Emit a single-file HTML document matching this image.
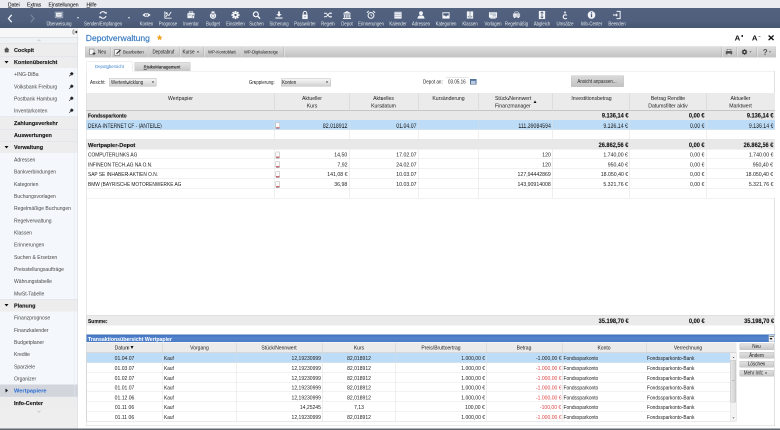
<!DOCTYPE html>
<html><head><meta charset="utf-8"><style>
html,body{margin:0;padding:0;width:780px;height:430px;overflow:hidden;background:#fff;}
#root{position:absolute;left:0;top:0;width:1560px;height:860px;transform:scale(0.5);transform-origin:0 0;will-change:transform;-webkit-font-smoothing:antialiased;font-family:"Liberation Sans",sans-serif;overflow:hidden;}
u{text-decoration:underline;text-decoration-thickness:1px;}
</style></head><body><div id="root">
<div style="position:absolute;left:0.00px;top:0.00px;width:1560.00px;height:16.40px;background:#e9ebf1;"></div>
<div style="position:absolute;left:16.00px;transform-origin:0 50%;top:-3.20px;height:24.00px;line-height:24.00px;font-size:11.36px;color:#1a1a1a;font-weight:normal;white-space:nowrap;transform:scaleX(0.88);-webkit-text-stroke:0.2px #1a1a1a;"><u>D</u>atei</div>
<div style="position:absolute;left:54.00px;transform-origin:0 50%;top:-3.20px;height:24.00px;line-height:24.00px;font-size:11.36px;color:#1a1a1a;font-weight:normal;white-space:nowrap;transform:scaleX(0.88);-webkit-text-stroke:0.2px #1a1a1a;">E<u>x</u>tras</div>
<div style="position:absolute;left:97.00px;transform-origin:0 50%;top:-3.20px;height:24.00px;line-height:24.00px;font-size:11.36px;color:#1a1a1a;font-weight:normal;white-space:nowrap;transform:scaleX(0.88);-webkit-text-stroke:0.2px #1a1a1a;">E<u>i</u>nstellungen</div>
<div style="position:absolute;left:172.60px;transform-origin:0 50%;top:-3.20px;height:24.00px;line-height:24.00px;font-size:11.36px;color:#1a1a1a;font-weight:normal;white-space:nowrap;transform:scaleX(0.88);-webkit-text-stroke:0.2px #1a1a1a;"><u>H</u>ilfe</div>
<div style="position:absolute;left:0.00px;top:16.40px;width:1560.00px;height:39.20px;background:linear-gradient(#52627f,#4f5f7d 65%,#485772);"></div>
<svg style="position:absolute;left:15.00px;top:28.00px;width:10.00px;height:18.00px" viewBox="0 0 5 9"><path d="M4.2 0.8 L1 4.5 L4.2 8.2" stroke="#f2f4f8" stroke-width="1.3" fill="none"/></svg>
<svg style="position:absolute;left:60.00px;top:28.00px;width:10.00px;height:18.00px" viewBox="0 0 5 9"><path d="M0.8 0.8 L4 4.5 L0.8 8.2" stroke="#76839b" stroke-width="1.3" fill="none"/></svg>
<div style="position:absolute;left:-82.00px;width:400.00px;text-align:center;transform-origin:50% 50%;top:35.60px;height:24.00px;line-height:24.00px;font-size:10.49px;color:#e4e8ee;font-weight:normal;white-space:nowrap;transform:scaleX(0.82);">Überweisung</div>
<svg style="position:absolute;left:109.00px;top:21.20px;width:18.00px;height:18.00px" viewBox="0 0 20 20"><rect x="1.5" y="3.5" width="17" height="12.5" fill="none" stroke="#aeb7c7" stroke-width="1.6"/><rect x="3.5" y="5" width="12.5" height="9" fill="#f2f4f8"/><rect x="6" y="8.5" width="8" height="2" fill="#a6afbf"/><rect x="5" y="16" width="10" height="1.5" fill="#aeb7c7"/></svg>
<div style="position:absolute;left:6.00px;width:400.00px;text-align:center;transform-origin:50% 50%;top:35.60px;height:24.00px;line-height:24.00px;font-size:10.49px;color:#e4e8ee;font-weight:normal;white-space:nowrap;transform:scaleX(0.82);">Senden/Empfangen</div>
<svg style="position:absolute;left:197.00px;top:21.20px;width:18.00px;height:18.00px" viewBox="0 0 20 20"><path d="M15.5 5.5 A7 7 0 0 0 3.3 7.5" stroke="#f2f4f8" stroke-width="2.4" fill="none"/><path d="M4.5 14.5 A7 7 0 0 0 16.7 12.5" stroke="#f2f4f8" stroke-width="2.4" fill="none"/><path d="M12.5 5.5 L18 2.5 L18 8 Z" fill="#f2f4f8"/><path d="M7.5 14.5 L2 17.5 L2 12 Z" fill="#f2f4f8"/></svg>
<div style="position:absolute;left:93.00px;width:400.00px;text-align:center;transform-origin:50% 50%;top:35.60px;height:24.00px;line-height:24.00px;font-size:10.49px;color:#e4e8ee;font-weight:normal;white-space:nowrap;transform:scaleX(0.82);">Konten</div>
<svg style="position:absolute;left:284.00px;top:21.20px;width:18.00px;height:18.00px" viewBox="0 0 20 20"><path d="M1 10 Q10 1 19 10 Q10 19 1 10 Z" fill="#f2f4f8"/><circle cx="10" cy="10" r="3" fill="#4b5b7b"/><circle cx="10" cy="10" r="1.5" fill="#f2f4f8"/></svg>
<div style="position:absolute;left:136.00px;width:400.00px;text-align:center;transform-origin:50% 50%;top:35.60px;height:24.00px;line-height:24.00px;font-size:10.49px;color:#e4e8ee;font-weight:normal;white-space:nowrap;transform:scaleX(0.82);">Prognose</div>
<svg style="position:absolute;left:327.00px;top:21.20px;width:18.00px;height:18.00px" viewBox="0 0 20 20"><path d="M3 2 L3 17 L18 17" stroke="#f2f4f8" stroke-width="2" fill="none"/><path d="M5 14 L9 9 L12 11 L17 3" stroke="#f2f4f8" stroke-width="2" fill="none"/><rect x="5" y="4" width="4" height="4" fill="#f2f4f8"/></svg>
<div style="position:absolute;left:182.00px;width:400.00px;text-align:center;transform-origin:50% 50%;top:35.60px;height:24.00px;line-height:24.00px;font-size:10.49px;color:#e4e8ee;font-weight:normal;white-space:nowrap;transform:scaleX(0.82);">Inventar</div>
<svg style="position:absolute;left:373.00px;top:21.20px;width:18.00px;height:18.00px" viewBox="0 0 20 20"><rect x="2" y="6" width="16" height="11" fill="#f2f4f8"/><rect x="6" y="3" width="8" height="3" fill="none" stroke="#f2f4f8" stroke-width="1.6"/><rect x="4" y="9" width="7" height="2" fill="#8e9ab0"/><path d="M12 17 L12 12 L15 9 L18 12 L18 17 Z" fill="#4b5b7b"/><path d="M13 17 L13 12.5 L15 10.5 L17 12.5 L17 17 Z" fill="#f2f4f8"/></svg>
<div style="position:absolute;left:226.00px;width:400.00px;text-align:center;transform-origin:50% 50%;top:35.60px;height:24.00px;line-height:24.00px;font-size:10.49px;color:#e4e8ee;font-weight:normal;white-space:nowrap;transform:scaleX(0.82);">Budget</div>
<svg style="position:absolute;left:417.00px;top:21.20px;width:18.00px;height:18.00px" viewBox="0 0 20 20"><circle cx="10" cy="11.5" r="7" fill="#f2f4f8"/><rect x="6.5" y="2" width="7" height="4" rx="1.5" fill="#f2f4f8"/><rect x="6" y="6" width="8" height="1.2" fill="#4b5b7b"/><circle cx="10" cy="12" r="3.2" fill="none" stroke="#8e9ab0" stroke-width="1.4"/></svg>
<div style="position:absolute;left:271.00px;width:400.00px;text-align:center;transform-origin:50% 50%;top:35.60px;height:24.00px;line-height:24.00px;font-size:10.49px;color:#e4e8ee;font-weight:normal;white-space:nowrap;transform:scaleX(0.82);">Einstellen</div>
<svg style="position:absolute;left:462.00px;top:21.20px;width:18.00px;height:18.00px" viewBox="0 0 20 20"><g fill="#f2f4f8"><circle cx="10" cy="10" r="6"/><rect x="8" y="1" width="4" height="18"/><rect x="1" y="8" width="18" height="4"/><rect x="8" y="1" width="4" height="18" transform="rotate(45 10 10)"/><rect x="8" y="1" width="4" height="18" transform="rotate(-45 10 10)"/></g><circle cx="10" cy="10" r="2.6" fill="#4b5b7b"/></svg>
<div style="position:absolute;left:313.00px;width:400.00px;text-align:center;transform-origin:50% 50%;top:35.60px;height:24.00px;line-height:24.00px;font-size:10.49px;color:#e4e8ee;font-weight:normal;white-space:nowrap;transform:scaleX(0.82);">Suchen</div>
<svg style="position:absolute;left:504.00px;top:21.20px;width:18.00px;height:18.00px" viewBox="0 0 20 20"><circle cx="8.5" cy="8.5" r="5.5" stroke="#f2f4f8" stroke-width="2.6" fill="none"/><path d="M12.5 12.5 L18 18" stroke="#f2f4f8" stroke-width="3"/></svg>
<div style="position:absolute;left:358.00px;width:400.00px;text-align:center;transform-origin:50% 50%;top:35.60px;height:24.00px;line-height:24.00px;font-size:10.49px;color:#e4e8ee;font-weight:normal;white-space:nowrap;transform:scaleX(0.82);">Sicherung</div>
<svg style="position:absolute;left:549.00px;top:21.20px;width:18.00px;height:18.00px" viewBox="0 0 20 20"><path d="M8 2 L12 2 L12 8 L16 8 L10 14 L4 8 L8 8 Z" fill="#f2f4f8"/><rect x="2" y="15.5" width="16" height="2.5" fill="#f2f4f8"/></svg>
<div style="position:absolute;left:410.00px;width:400.00px;text-align:center;transform-origin:50% 50%;top:35.60px;height:24.00px;line-height:24.00px;font-size:10.49px;color:#e4e8ee;font-weight:normal;white-space:nowrap;transform:scaleX(0.82);">Passwörter</div>
<svg style="position:absolute;left:601.00px;top:21.20px;width:18.00px;height:18.00px" viewBox="0 0 20 20"><path d="M6 9 L6 6 A4 4 0 0 1 14 6 L14 9" stroke="#f2f4f8" stroke-width="2.2" fill="none"/><rect x="4" y="9" width="12" height="10" fill="#f2f4f8"/><circle cx="10" cy="14" r="1.3" fill="#4b5b7b"/></svg>
<div style="position:absolute;left:456.00px;width:400.00px;text-align:center;transform-origin:50% 50%;top:35.60px;height:24.00px;line-height:24.00px;font-size:10.49px;color:#e4e8ee;font-weight:normal;white-space:nowrap;transform:scaleX(0.82);">Regeln</div>
<svg style="position:absolute;left:647.00px;top:21.20px;width:18.00px;height:18.00px" viewBox="0 0 20 20"><path d="M1 6 L6 6 L13 14 L17 14" stroke="#f2f4f8" stroke-width="2.2" fill="none"/><path d="M1 14 L6 14 L13 6 L17 6" stroke="#f2f4f8" stroke-width="2.2" fill="none"/><path d="M16 3 L19 6 L16 9 Z M16 11 L19 14 L16 17 Z" fill="#f2f4f8"/></svg>
<div style="position:absolute;left:494.00px;width:400.00px;text-align:center;transform-origin:50% 50%;top:35.60px;height:24.00px;line-height:24.00px;font-size:10.49px;color:#e4e8ee;font-weight:normal;white-space:nowrap;transform:scaleX(0.82);">Depot</div>
<svg style="position:absolute;left:685.00px;top:21.20px;width:18.00px;height:18.00px" viewBox="0 0 20 20"><path d="M10 1 L19 6 L1 6 Z" fill="#f2f4f8"/><rect x="2" y="7" width="16" height="2" fill="#f2f4f8"/><rect x="3" y="10" width="2.4" height="6" fill="#f2f4f8"/><rect x="7" y="10" width="2.4" height="6" fill="#f2f4f8"/><rect x="11" y="10" width="2.4" height="6" fill="#f2f4f8"/><rect x="15" y="10" width="2.4" height="6" fill="#f2f4f8"/><rect x="1" y="16.5" width="18" height="2.5" fill="#f2f4f8"/></svg>
<div style="position:absolute;left:542.00px;width:400.00px;text-align:center;transform-origin:50% 50%;top:35.60px;height:24.00px;line-height:24.00px;font-size:10.49px;color:#e4e8ee;font-weight:normal;white-space:nowrap;transform:scaleX(0.82);">Erinnerungen</div>
<svg style="position:absolute;left:733.00px;top:21.20px;width:18.00px;height:18.00px" viewBox="0 0 20 20"><circle cx="10" cy="11" r="6.5" stroke="#f2f4f8" stroke-width="2.2" fill="none"/><path d="M10 7 L10 11 L13 13" stroke="#f2f4f8" stroke-width="1.6" fill="none"/><path d="M1 5 L5 1 M19 5 L15 1" stroke="#f2f4f8" stroke-width="2.4"/></svg>
<div style="position:absolute;left:596.00px;width:400.00px;text-align:center;transform-origin:50% 50%;top:35.60px;height:24.00px;line-height:24.00px;font-size:10.49px;color:#e4e8ee;font-weight:normal;white-space:nowrap;transform:scaleX(0.82);">Kalender</div>
<svg style="position:absolute;left:787.00px;top:21.20px;width:18.00px;height:18.00px" viewBox="0 0 20 20"><rect x="2" y="3" width="16" height="15" fill="#f2f4f8"/><rect x="2" y="3" width="16" height="3" fill="#c9cfda"/><g fill="#9aa5b8"><rect x="4" y="8" width="3" height="2"/><rect x="8.5" y="8" width="3" height="2"/><rect x="13" y="8" width="3" height="2"/><rect x="4" y="12" width="3" height="2"/><rect x="8.5" y="12" width="3" height="2"/><rect x="13" y="12" width="3" height="2"/></g></svg>
<div style="position:absolute;left:642.00px;width:400.00px;text-align:center;transform-origin:50% 50%;top:35.60px;height:24.00px;line-height:24.00px;font-size:10.49px;color:#e4e8ee;font-weight:normal;white-space:nowrap;transform:scaleX(0.82);">Adressen</div>
<svg style="position:absolute;left:833.00px;top:21.20px;width:18.00px;height:18.00px" viewBox="0 0 20 20"><circle cx="10" cy="6" r="4.2" fill="#f2f4f8"/><path d="M2 18 Q3 10 10 11 Q17 10 18 18 Z" fill="#f2f4f8"/></svg>
<div style="position:absolute;left:692.00px;width:400.00px;text-align:center;transform-origin:50% 50%;top:35.60px;height:24.00px;line-height:24.00px;font-size:10.49px;color:#e4e8ee;font-weight:normal;white-space:nowrap;transform:scaleX(0.82);">Kategorien</div>
<svg style="position:absolute;left:883.00px;top:21.20px;width:18.00px;height:18.00px" viewBox="0 0 20 20"><path d="M2 4 L18 4 L18 18 L2 18 Z" fill="#f2f4f8"/><path d="M4 6 L16 6 L16 11 L12 11 L10 14 L8 11 L4 11 Z" fill="#4b5b7b"/></svg>
<div style="position:absolute;left:740.00px;width:400.00px;text-align:center;transform-origin:50% 50%;top:35.60px;height:24.00px;line-height:24.00px;font-size:10.49px;color:#e4e8ee;font-weight:normal;white-space:nowrap;transform:scaleX(0.82);">Klassen</div>
<svg style="position:absolute;left:931.00px;top:21.20px;width:18.00px;height:18.00px" viewBox="0 0 20 20"><rect x="3" y="2" width="14" height="16" fill="#f2f4f8"/><path d="M10 2 L10 18" stroke="#4b5b7b" stroke-width="1.2"/><rect x="5" y="12" width="3" height="3" fill="#8e9ab0"/><rect x="12" y="12" width="3" height="3" fill="#8e9ab0"/></svg>
<div style="position:absolute;left:786.00px;width:400.00px;text-align:center;transform-origin:50% 50%;top:35.60px;height:24.00px;line-height:24.00px;font-size:10.49px;color:#e4e8ee;font-weight:normal;white-space:nowrap;transform:scaleX(0.82);">Vorlagen</div>
<svg style="position:absolute;left:977.00px;top:21.20px;width:18.00px;height:18.00px" viewBox="0 0 20 20"><rect x="1" y="4" width="18" height="12" fill="#f2f4f8"/><rect x="3" y="7" width="14" height="1.8" fill="#8e9ab0"/><rect x="9" y="11" width="8" height="1.8" fill="#8e9ab0"/><rect x="4" y="16" width="12" height="2" fill="#f2f4f8"/></svg>
<div style="position:absolute;left:833.00px;width:400.00px;text-align:center;transform-origin:50% 50%;top:35.60px;height:24.00px;line-height:24.00px;font-size:10.49px;color:#e4e8ee;font-weight:normal;white-space:nowrap;transform:scaleX(0.82);">Regelmäßig</div>
<svg style="position:absolute;left:1024.00px;top:21.20px;width:18.00px;height:18.00px" viewBox="0 0 20 20"><rect x="2" y="6" width="16" height="9" rx="2" fill="#c9cfda"/><rect x="4" y="8" width="6" height="3" fill="#f2f4f8"/><circle cx="6" cy="15" r="2" fill="#f2f4f8"/><circle cx="14" cy="15" r="2" fill="#f2f4f8"/><path d="M5 6 L7 3 L13 3 L15 6" stroke="#c9cfda" stroke-width="1.6" fill="none"/></svg>
<div style="position:absolute;left:884.00px;width:400.00px;text-align:center;transform-origin:50% 50%;top:35.60px;height:24.00px;line-height:24.00px;font-size:10.49px;color:#e4e8ee;font-weight:normal;white-space:nowrap;transform:scaleX(0.82);">Abgleich</div>
<svg style="position:absolute;left:1075.00px;top:21.20px;width:18.00px;height:18.00px" viewBox="0 0 20 20"><rect x="3" y="1" width="14" height="18" fill="#f2f4f8"/><path d="M10 3 L10 17" stroke="#4b5b7b" stroke-width="1.8"/><path d="M7 6 L10 3 L13 6 M7 14 L10 17 L13 14" stroke="#4b5b7b" stroke-width="1.6" fill="none"/></svg>
<div style="position:absolute;left:930.00px;width:400.00px;text-align:center;transform-origin:50% 50%;top:35.60px;height:24.00px;line-height:24.00px;font-size:10.49px;color:#e4e8ee;font-weight:normal;white-space:nowrap;transform:scaleX(0.82);">Umsätze</div>
<svg style="position:absolute;left:1121.00px;top:21.20px;width:18.00px;height:18.00px" viewBox="0 0 20 20"><path d="M10 1 L13 5 L7 5 Z" fill="#f2f4f8"/><path d="M10 5 L10 8" stroke="#f2f4f8" stroke-width="1.6"/><path d="M14 11 A4.5 4.5 0 1 0 14 17" stroke="#f2f4f8" stroke-width="2.6" fill="none"/></svg>
<div style="position:absolute;left:983.00px;width:400.00px;text-align:center;transform-origin:50% 50%;top:35.60px;height:24.00px;line-height:24.00px;font-size:10.49px;color:#e4e8ee;font-weight:normal;white-space:nowrap;transform:scaleX(0.82);">Info-Center</div>
<svg style="position:absolute;left:1174.00px;top:21.20px;width:18.00px;height:18.00px" viewBox="0 0 20 20"><circle cx="10" cy="10" r="8.5" fill="#f2f4f8"/><rect x="8.6" y="8" width="2.8" height="7" fill="#4b5b7b"/><circle cx="10" cy="5.3" r="1.6" fill="#4b5b7b"/></svg>
<div style="position:absolute;left:1034.00px;width:400.00px;text-align:center;transform-origin:50% 50%;top:35.60px;height:24.00px;line-height:24.00px;font-size:10.49px;color:#e4e8ee;font-weight:normal;white-space:nowrap;transform:scaleX(0.82);">Beenden</div>
<svg style="position:absolute;left:1225.00px;top:21.20px;width:18.00px;height:18.00px" viewBox="0 0 20 20"><path d="M9 2 L17 2 L17 18 L9 18" stroke="#f2f4f8" stroke-width="2.2" fill="none"/><path d="M1 10 L11 10" stroke="#f2f4f8" stroke-width="2.4"/><path d="M8 6 L12 10 L8 14 Z" fill="#f2f4f8"/></svg>
<div style="position:absolute;left:153.60px;top:34.00px;width:0;height:0;border-left:2.40px solid transparent;border-right:2.40px solid transparent;border-top:4.00px solid #dfe4ec"></div>
<div style="position:absolute;left:255.60px;top:34.00px;width:0;height:0;border-left:2.40px solid transparent;border-right:2.40px solid transparent;border-top:4.00px solid #dfe4ec"></div>
<div style="position:absolute;left:0.00px;top:55.60px;width:156.00px;height:804.40px;background:#eeeeee;"></div>
<div style="position:absolute;left:0.00px;top:55.60px;width:156.00px;height:18.40px;background:#f7f7f7;"></div>
<div style="position:absolute;left:0.00px;top:73.80px;width:157.00px;height:1.20px;background:#cdd5e0;"></div>
<div style="position:absolute;left:0.00px;top:75.00px;width:157.00px;height:12.20px;background:#f0f1f3;"></div>
<div style="position:absolute;left:155.20px;top:55.60px;width:1.00px;height:801.40px;background:#d6dae0;"></div>
<svg style="position:absolute;left:145.00px;top:59.00px;width:10.00px;height:10.00px" viewBox="0 0 10 10"><path d="M1 1 L1 9 M1 1 L4 1 M1 9 L4 9" stroke="#555" stroke-width="1.2" fill="none"/><path d="M4 5 L9 5 M6.5 2.5 L9 5 L6.5 7.5" stroke="#222" stroke-width="1.6" fill="none"/></svg>
<div style="position:absolute;left:0.00px;top:87.20px;width:155.20px;height:24.34px;background:#ededed;border-top:1px solid #d9dfe7;box-sizing:border-box;"></div>
<div style="position:absolute;left:28.00px;transform-origin:0 50%;top:87.77px;height:24.00px;line-height:24.00px;font-size:10.90px;color:#1a1a1a;font-weight:bold;white-space:nowrap;transform:scaleX(1.0);-webkit-text-stroke:0.25px #1a1a1a;">Cockpit</div>
<svg style="position:absolute;left:8.00px;top:94.17px;width:10.80px;height:10.80px" viewBox="0 0 10 10"><path d="M5 0.5 L10 5.2 L8.6 5.2 L8.6 10 L1.4 10 L1.4 5.2 L0 5.2 Z" fill="#555"/></svg>
<div style="position:absolute;left:0.00px;top:111.54px;width:155.20px;height:24.34px;background:#ededed;border-top:1px solid #d9dfe7;box-sizing:border-box;"></div>
<div style="position:absolute;left:28.00px;transform-origin:0 50%;top:112.11px;height:24.00px;line-height:24.00px;font-size:10.90px;color:#1a1a1a;font-weight:bold;white-space:nowrap;transform:scaleX(1.0);-webkit-text-stroke:0.25px #1a1a1a;">Kontenübersicht</div>
<div style="position:absolute;left:8.80px;top:121.61px;width:0;height:0;border-left:4.40px solid transparent;border-right:4.40px solid transparent;border-top:5.00px solid #111"></div>
<div style="position:absolute;left:0.00px;top:135.88px;width:155.20px;height:24.34px;background:#f4f8fc;"></div>
<div style="position:absolute;left:28.00px;transform-origin:0 50%;top:136.45px;height:24.00px;line-height:24.00px;font-size:11.48px;color:#474747;font-weight:normal;white-space:nowrap;transform:scaleX(0.88);">+ING-DiBa</div>
<svg style="position:absolute;left:137.60px;top:143.25px;width:10.00px;height:10.00px" viewBox="0 0 10 10"><path d="M5.5 0.5 L9.5 4.5 L8 5.5 L6 8.5 L1.5 4 L4.5 2 Z" fill="#222"/><path d="M3.5 6.5 L0.5 9.5" stroke="#222" stroke-width="1.5"/></svg>
<div style="position:absolute;left:0.00px;top:160.22px;width:155.20px;height:24.34px;background:#f4f8fc;"></div>
<div style="position:absolute;left:28.00px;transform-origin:0 50%;top:160.79px;height:24.00px;line-height:24.00px;font-size:11.48px;color:#474747;font-weight:normal;white-space:nowrap;transform:scaleX(0.88);">Volksbank Freiburg</div>
<svg style="position:absolute;left:137.60px;top:167.59px;width:10.00px;height:10.00px" viewBox="0 0 10 10"><path d="M5.5 0.5 L9.5 4.5 L8 5.5 L6 8.5 L1.5 4 L4.5 2 Z" fill="#222"/><path d="M3.5 6.5 L0.5 9.5" stroke="#222" stroke-width="1.5"/></svg>
<div style="position:absolute;left:0.00px;top:184.56px;width:155.20px;height:24.34px;background:#f4f8fc;"></div>
<div style="position:absolute;left:28.00px;transform-origin:0 50%;top:185.13px;height:24.00px;line-height:24.00px;font-size:11.48px;color:#474747;font-weight:normal;white-space:nowrap;transform:scaleX(0.88);">Postbank Hamburg</div>
<svg style="position:absolute;left:137.60px;top:191.93px;width:10.00px;height:10.00px" viewBox="0 0 10 10"><path d="M5.5 0.5 L9.5 4.5 L8 5.5 L6 8.5 L1.5 4 L4.5 2 Z" fill="#222"/><path d="M3.5 6.5 L0.5 9.5" stroke="#222" stroke-width="1.5"/></svg>
<div style="position:absolute;left:0.00px;top:208.90px;width:155.20px;height:24.34px;background:#f4f8fc;"></div>
<div style="position:absolute;left:28.00px;transform-origin:0 50%;top:209.47px;height:24.00px;line-height:24.00px;font-size:11.48px;color:#474747;font-weight:normal;white-space:nowrap;transform:scaleX(0.88);">Inventarkonten</div>
<svg style="position:absolute;left:137.60px;top:216.27px;width:10.00px;height:10.00px" viewBox="0 0 10 10"><path d="M5.5 0.5 L9.5 4.5 L8 5.5 L6 8.5 L1.5 4 L4.5 2 Z" fill="#222"/><path d="M3.5 6.5 L0.5 9.5" stroke="#222" stroke-width="1.5"/></svg>
<div style="position:absolute;left:0.00px;top:233.24px;width:155.20px;height:24.34px;background:#ededed;border-top:1px solid #d9dfe7;box-sizing:border-box;"></div>
<div style="position:absolute;left:28.00px;transform-origin:0 50%;top:233.81px;height:24.00px;line-height:24.00px;font-size:10.90px;color:#1a1a1a;font-weight:bold;white-space:nowrap;transform:scaleX(1.0);-webkit-text-stroke:0.25px #1a1a1a;">Zahlungsverkehr</div>
<div style="position:absolute;left:0.00px;top:257.58px;width:155.20px;height:24.34px;background:#ededed;border-top:1px solid #d9dfe7;box-sizing:border-box;"></div>
<div style="position:absolute;left:28.00px;transform-origin:0 50%;top:258.15px;height:24.00px;line-height:24.00px;font-size:10.90px;color:#1a1a1a;font-weight:bold;white-space:nowrap;transform:scaleX(1.0);-webkit-text-stroke:0.25px #1a1a1a;">Auswertungen</div>
<div style="position:absolute;left:0.00px;top:281.92px;width:155.20px;height:24.34px;background:#ededed;border-top:1px solid #d9dfe7;box-sizing:border-box;"></div>
<div style="position:absolute;left:28.00px;transform-origin:0 50%;top:282.49px;height:24.00px;line-height:24.00px;font-size:10.90px;color:#1a1a1a;font-weight:bold;white-space:nowrap;transform:scaleX(1.0);-webkit-text-stroke:0.25px #1a1a1a;">Verwaltung</div>
<div style="position:absolute;left:8.80px;top:291.99px;width:0;height:0;border-left:4.40px solid transparent;border-right:4.40px solid transparent;border-top:5.00px solid #111"></div>
<div style="position:absolute;left:0.00px;top:306.26px;width:155.20px;height:24.34px;background:#f4f8fc;"></div>
<div style="position:absolute;left:28.00px;transform-origin:0 50%;top:306.83px;height:24.00px;line-height:24.00px;font-size:11.48px;color:#474747;font-weight:normal;white-space:nowrap;transform:scaleX(0.88);">Adressen</div>
<div style="position:absolute;left:0.00px;top:330.60px;width:155.20px;height:24.34px;background:#f4f8fc;"></div>
<div style="position:absolute;left:28.00px;transform-origin:0 50%;top:331.17px;height:24.00px;line-height:24.00px;font-size:11.48px;color:#474747;font-weight:normal;white-space:nowrap;transform:scaleX(0.88);">Bankverbindungen</div>
<div style="position:absolute;left:0.00px;top:354.94px;width:155.20px;height:24.34px;background:#f4f8fc;"></div>
<div style="position:absolute;left:28.00px;transform-origin:0 50%;top:355.51px;height:24.00px;line-height:24.00px;font-size:11.48px;color:#474747;font-weight:normal;white-space:nowrap;transform:scaleX(0.88);">Kategorien</div>
<div style="position:absolute;left:0.00px;top:379.28px;width:155.20px;height:24.34px;background:#f4f8fc;"></div>
<div style="position:absolute;left:28.00px;transform-origin:0 50%;top:379.85px;height:24.00px;line-height:24.00px;font-size:11.48px;color:#474747;font-weight:normal;white-space:nowrap;transform:scaleX(0.88);">Buchungsvorlagen</div>
<div style="position:absolute;left:0.00px;top:403.62px;width:155.20px;height:24.34px;background:#f4f8fc;"></div>
<div style="position:absolute;left:28.00px;transform-origin:0 50%;top:404.19px;height:24.00px;line-height:24.00px;font-size:11.48px;color:#474747;font-weight:normal;white-space:nowrap;transform:scaleX(0.88);">Regelmäßige Buchungen</div>
<div style="position:absolute;left:0.00px;top:427.96px;width:155.20px;height:24.34px;background:#f4f8fc;"></div>
<div style="position:absolute;left:28.00px;transform-origin:0 50%;top:428.53px;height:24.00px;line-height:24.00px;font-size:11.48px;color:#474747;font-weight:normal;white-space:nowrap;transform:scaleX(0.88);">Regelverwaltung</div>
<div style="position:absolute;left:0.00px;top:452.30px;width:155.20px;height:24.34px;background:#f4f8fc;"></div>
<div style="position:absolute;left:28.00px;transform-origin:0 50%;top:452.87px;height:24.00px;line-height:24.00px;font-size:11.48px;color:#474747;font-weight:normal;white-space:nowrap;transform:scaleX(0.88);">Klassen</div>
<div style="position:absolute;left:0.00px;top:476.64px;width:155.20px;height:24.34px;background:#f4f8fc;"></div>
<div style="position:absolute;left:28.00px;transform-origin:0 50%;top:477.21px;height:24.00px;line-height:24.00px;font-size:11.48px;color:#474747;font-weight:normal;white-space:nowrap;transform:scaleX(0.88);">Erinnerungen</div>
<div style="position:absolute;left:0.00px;top:500.98px;width:155.20px;height:24.34px;background:#f4f8fc;"></div>
<div style="position:absolute;left:28.00px;transform-origin:0 50%;top:501.55px;height:24.00px;line-height:24.00px;font-size:11.48px;color:#474747;font-weight:normal;white-space:nowrap;transform:scaleX(0.88);">Suchen &amp; Ersetzen</div>
<div style="position:absolute;left:0.00px;top:525.32px;width:155.20px;height:24.34px;background:#f4f8fc;"></div>
<div style="position:absolute;left:28.00px;transform-origin:0 50%;top:525.89px;height:24.00px;line-height:24.00px;font-size:11.48px;color:#474747;font-weight:normal;white-space:nowrap;transform:scaleX(0.88);">Preisstellungsaufträge</div>
<div style="position:absolute;left:0.00px;top:549.66px;width:155.20px;height:24.34px;background:#f4f8fc;"></div>
<div style="position:absolute;left:28.00px;transform-origin:0 50%;top:550.23px;height:24.00px;line-height:24.00px;font-size:11.48px;color:#474747;font-weight:normal;white-space:nowrap;transform:scaleX(0.88);">Währungstabelle</div>
<div style="position:absolute;left:0.00px;top:574.00px;width:155.20px;height:24.34px;background:#f4f8fc;"></div>
<div style="position:absolute;left:28.00px;transform-origin:0 50%;top:574.57px;height:24.00px;line-height:24.00px;font-size:11.48px;color:#474747;font-weight:normal;white-space:nowrap;transform:scaleX(0.88);">MwSt-Tabelle</div>
<div style="position:absolute;left:0.00px;top:598.34px;width:155.20px;height:24.34px;background:#ededed;border-top:1px solid #d9dfe7;box-sizing:border-box;"></div>
<div style="position:absolute;left:28.00px;transform-origin:0 50%;top:598.91px;height:24.00px;line-height:24.00px;font-size:10.90px;color:#1a1a1a;font-weight:bold;white-space:nowrap;transform:scaleX(1.0);-webkit-text-stroke:0.25px #1a1a1a;">Planung</div>
<div style="position:absolute;left:8.80px;top:608.41px;width:0;height:0;border-left:4.40px solid transparent;border-right:4.40px solid transparent;border-top:5.00px solid #111"></div>
<div style="position:absolute;left:0.00px;top:622.68px;width:155.20px;height:24.34px;background:#f4f8fc;"></div>
<div style="position:absolute;left:28.00px;transform-origin:0 50%;top:623.25px;height:24.00px;line-height:24.00px;font-size:11.48px;color:#474747;font-weight:normal;white-space:nowrap;transform:scaleX(0.88);">Finanzprognose</div>
<div style="position:absolute;left:0.00px;top:647.02px;width:155.20px;height:24.34px;background:#f4f8fc;"></div>
<div style="position:absolute;left:28.00px;transform-origin:0 50%;top:647.59px;height:24.00px;line-height:24.00px;font-size:11.48px;color:#474747;font-weight:normal;white-space:nowrap;transform:scaleX(0.88);">Finanzkalender</div>
<div style="position:absolute;left:0.00px;top:671.36px;width:155.20px;height:24.34px;background:#f4f8fc;"></div>
<div style="position:absolute;left:28.00px;transform-origin:0 50%;top:671.93px;height:24.00px;line-height:24.00px;font-size:11.48px;color:#474747;font-weight:normal;white-space:nowrap;transform:scaleX(0.88);">Budgetplaner</div>
<div style="position:absolute;left:0.00px;top:695.70px;width:155.20px;height:24.34px;background:#f4f8fc;"></div>
<div style="position:absolute;left:28.00px;transform-origin:0 50%;top:696.27px;height:24.00px;line-height:24.00px;font-size:11.48px;color:#474747;font-weight:normal;white-space:nowrap;transform:scaleX(0.88);">Kredite</div>
<div style="position:absolute;left:0.00px;top:720.04px;width:155.20px;height:24.34px;background:#f4f8fc;"></div>
<div style="position:absolute;left:28.00px;transform-origin:0 50%;top:720.61px;height:24.00px;line-height:24.00px;font-size:11.48px;color:#474747;font-weight:normal;white-space:nowrap;transform:scaleX(0.88);">Sparziele</div>
<div style="position:absolute;left:0.00px;top:744.38px;width:155.20px;height:24.34px;background:#f4f8fc;"></div>
<div style="position:absolute;left:28.00px;transform-origin:0 50%;top:744.95px;height:24.00px;line-height:24.00px;font-size:11.48px;color:#474747;font-weight:normal;white-space:nowrap;transform:scaleX(0.88);">Organizer</div>
<div style="position:absolute;left:0.00px;top:768.72px;width:155.20px;height:24.34px;background:#d2d6dc;"></div>
<div style="position:absolute;left:28.00px;transform-origin:0 50%;top:769.29px;height:24.00px;line-height:24.00px;font-size:11.30px;color:#2c6dd2;font-weight:bold;white-space:nowrap;transform:scaleX(1.0);">Wertpapiere</div>
<div style="position:absolute;left:11.00px;top:776.89px;width:0;height:0;border-top:4.40px solid transparent;border-bottom:4.40px solid transparent;border-left:5.20px solid #111"></div>
<div style="position:absolute;left:0.00px;top:793.06px;width:155.20px;height:24.34px;background:#ededed;border-top:1px solid #d9dfe7;box-sizing:border-box;"></div>
<div style="position:absolute;left:28.00px;transform-origin:0 50%;top:793.63px;height:24.00px;line-height:24.00px;font-size:10.90px;color:#1a1a1a;font-weight:bold;white-space:nowrap;transform:scaleX(1.0);-webkit-text-stroke:0.25px #1a1a1a;">Info-Center</div>
<div style="position:absolute;left:148.80px;top:87.20px;width:0.80px;height:730.00px;background:#e6eaef;"></div>
<svg style="position:absolute;left:74.00px;top:78.40px;width:8.00px;height:6.00px" viewBox="0 0 8 5"><path d="M1 4 L4 1 L7 4" stroke="#c4c4c4" stroke-width="1.2" fill="none"/></svg>
<svg style="position:absolute;left:74.00px;top:820.00px;width:8.00px;height:6.00px" viewBox="0 0 8 5"><path d="M1 1 L4 4 L7 1" stroke="#b8b8b8" stroke-width="1.2" fill="none"/></svg>
<div style="position:absolute;left:157.40px;top:55.60px;width:1402.60px;height:801.40px;background:#ffffff;"></div>
<div style="position:absolute;left:171.60px;transform-origin:0 50%;top:64.80px;height:24.00px;line-height:24.00px;font-size:17.10px;color:#3b7cc2;font-weight:normal;white-space:nowrap;transform:scaleX(1.0);-webkit-text-stroke:0.35px #3b7cc2;">Depotverwaltung</div>
<svg style="position:absolute;left:313.00px;top:69.20px;width:12.40px;height:12.40px" viewBox="0 0 20 20"><path d="M10 0.5 L12.9 6.8 L19.6 7.3 L14.5 11.8 L16.1 18.6 L10 15 L3.9 18.6 L5.5 11.8 L0.4 7.3 L7.1 6.8 Z" fill="#f2a31d"/></svg>
<div style="position:absolute;left:1469.20px;transform-origin:0 50%;top:63.60px;height:24.00px;line-height:24.00px;font-size:15.50px;color:#111;font-weight:bold;white-space:nowrap;transform:scaleX(1.0);">A</div>
<div style="position:absolute;left:1483.20px;top:70.40px;width:3.20px;height:3.20px;background:#222;"></div>
<div style="position:absolute;left:1503.80px;transform-origin:0 50%;top:63.60px;height:24.00px;line-height:24.00px;font-size:15.50px;color:#111;font-weight:bold;white-space:nowrap;transform:scaleX(1.0);">A</div>
<div style="position:absolute;left:1517.20px;top:71.60px;width:3.60px;height:1.60px;background:#222;"></div>
<svg style="position:absolute;left:1536.00px;top:70.00px;width:12.40px;height:11.20px" viewBox="0 0 10 9"><path d="M1 0.8 L9 8.2 M9 0.8 L1 8.2" stroke="#111" stroke-width="2.2"/></svg>
<div style="position:absolute;left:170.00px;top:92.60px;width:1381.60px;height:22.80px;background:linear-gradient(#dedede,#c3c3c3);border:1px solid #c9c9c9;box-sizing:border-box;"></div>
<div style="position:absolute;left:220.80px;top:94.00px;width:1.00px;height:20.00px;background:#b3b3b3;"></div>
<div style="position:absolute;left:221.80px;top:94.00px;width:1.00px;height:20.00px;background:#efefef;"></div>
<div style="position:absolute;left:296.20px;top:94.00px;width:1.00px;height:20.00px;background:#b3b3b3;"></div>
<div style="position:absolute;left:297.20px;top:94.00px;width:1.00px;height:20.00px;background:#efefef;"></div>
<div style="position:absolute;left:359.00px;top:94.00px;width:1.00px;height:20.00px;background:#b3b3b3;"></div>
<div style="position:absolute;left:360.00px;top:94.00px;width:1.00px;height:20.00px;background:#efefef;"></div>
<div style="position:absolute;left:407.00px;top:94.00px;width:1.00px;height:20.00px;background:#b3b3b3;"></div>
<div style="position:absolute;left:408.00px;top:94.00px;width:1.00px;height:20.00px;background:#efefef;"></div>
<div style="position:absolute;left:481.60px;top:94.00px;width:1.00px;height:20.00px;background:#b3b3b3;"></div>
<div style="position:absolute;left:482.60px;top:94.00px;width:1.00px;height:20.00px;background:#efefef;"></div>
<div style="position:absolute;left:567.00px;top:94.00px;width:1.00px;height:20.00px;background:#b3b3b3;"></div>
<div style="position:absolute;left:568.00px;top:94.00px;width:1.00px;height:20.00px;background:#efefef;"></div>
<div style="position:absolute;left:1442.60px;top:94.00px;width:1.00px;height:20.00px;background:#b3b3b3;"></div>
<div style="position:absolute;left:1443.60px;top:94.00px;width:1.00px;height:20.00px;background:#efefef;"></div>
<div style="position:absolute;left:1472.80px;top:94.00px;width:1.00px;height:20.00px;background:#b3b3b3;"></div>
<div style="position:absolute;left:1473.80px;top:94.00px;width:1.00px;height:20.00px;background:#efefef;"></div>
<div style="position:absolute;left:1513.40px;top:94.00px;width:1.00px;height:20.00px;background:#b3b3b3;"></div>
<div style="position:absolute;left:1514.40px;top:94.00px;width:1.00px;height:20.00px;background:#efefef;"></div>
<svg style="position:absolute;left:177.60px;top:96.60px;width:14.00px;height:14.40px" viewBox="0 0 14 14"><rect x="1" y="1" width="9" height="11" fill="#fafafa" stroke="#777" stroke-width="1.2"/><path d="M10 7 L10 13 M7 10 L13 10" stroke="#333" stroke-width="1.8"/></svg>
<div style="position:absolute;left:196.20px;transform-origin:0 50%;top:92.40px;height:24.00px;line-height:24.00px;font-size:10.00px;color:#1c1c1c;font-weight:normal;white-space:nowrap;transform:scaleX(0.88);">Neu</div>
<svg style="position:absolute;left:227.60px;top:96.60px;width:14.80px;height:14.40px" viewBox="0 0 14 14"><rect x="1" y="2" width="10" height="11" fill="#fafafa" stroke="#777" stroke-width="1.2"/><path d="M5 10 L12.5 2.5" stroke="#333" stroke-width="2.4"/><path d="M4 11 L5.2 8.3 L6.5 9.6 Z" fill="#222"/></svg>
<div style="position:absolute;left:246.20px;transform-origin:0 50%;top:92.40px;height:24.00px;line-height:24.00px;font-size:9.77px;color:#1c1c1c;font-weight:normal;white-space:nowrap;transform:scaleX(0.88);">Bearbeiten</div>
<div style="position:absolute;left:305.20px;transform-origin:0 50%;top:92.40px;height:24.00px;line-height:24.00px;font-size:10.00px;color:#1c1c1c;font-weight:normal;white-space:nowrap;transform:scaleX(0.88);">Depotabruf</div>
<div style="position:absolute;left:365.40px;transform-origin:0 50%;top:92.40px;height:24.00px;line-height:24.00px;font-size:10.45px;color:#1c1c1c;font-weight:normal;white-space:nowrap;transform:scaleX(0.88);">Kurse</div>
<div style="position:absolute;left:393.80px;top:102.80px;width:0;height:0;border-left:2.60px solid transparent;border-right:2.60px solid transparent;border-top:3.20px solid #222"></div>
<div style="position:absolute;left:416.00px;transform-origin:0 50%;top:92.40px;height:24.00px;line-height:24.00px;font-size:9.77px;color:#1c1c1c;font-weight:normal;white-space:nowrap;transform:scaleX(0.88);">WP-Kontoblatt</div>
<div style="position:absolute;left:488.40px;transform-origin:0 50%;top:92.40px;height:24.00px;line-height:24.00px;font-size:9.43px;color:#1c1c1c;font-weight:normal;white-space:nowrap;transform:scaleX(0.88);">WP-Digitalanzeige</div>
<svg style="position:absolute;left:1451.00px;top:97.60px;width:14.00px;height:12.80px" viewBox="0 0 14 13"><rect x="3" y="0.5" width="8" height="4" fill="#eee" stroke="#555" stroke-width="1"/><rect x="0.5" y="4.5" width="13" height="6" fill="#555"/><rect x="3" y="9" width="8" height="3.5" fill="#eee" stroke="#555" stroke-width="1"/></svg>
<svg style="position:absolute;left:1483.20px;top:98.00px;width:12.00px;height:12.00px" viewBox="0 0 20 20"><g fill="#333"><circle cx="10" cy="10" r="6.5"/><rect x="8" y="1" width="4" height="18"/><rect x="1" y="8" width="18" height="4"/><rect x="8" y="1" width="4" height="18" transform="rotate(45 10 10)"/><rect x="8" y="1" width="4" height="18" transform="rotate(-45 10 10)"/></g><circle cx="10" cy="10" r="3.2" fill="#ddd"/></svg>
<div style="position:absolute;left:1499.40px;top:103.10px;width:0;height:0;border-left:2.20px solid transparent;border-right:2.20px solid transparent;border-top:2.60px solid #333"></div>
<div style="position:absolute;left:1330.40px;width:400.00px;text-align:center;transform-origin:50% 50%;top:92.80px;height:24.00px;line-height:24.00px;font-size:16.00px;color:#555;font-weight:bold;white-space:nowrap;transform:scaleX(1.0);">?</div>
<div style="position:absolute;left:1538.40px;top:103.10px;width:0;height:0;border-left:2.20px solid transparent;border-right:2.20px solid transparent;border-top:2.60px solid #333"></div>
<div style="position:absolute;left:173.20px;top:123.20px;width:92.00px;height:19.20px;background:#fff;border:1px solid #e0e0e0;border-bottom:none;box-sizing:border-box;border-radius:2px 2px 0 0;"></div>
<div style="position:absolute;left:19.20px;width:400.00px;text-align:center;transform-origin:50% 50%;top:121.20px;height:24.00px;line-height:24.00px;font-size:9.77px;color:#3b83d0;font-weight:normal;white-space:nowrap;transform:scaleX(0.88);">Depot<u>ü</u>bersicht</div>
<div style="position:absolute;left:269.40px;top:124.20px;width:111.60px;height:17.80px;background:linear-gradient(#e4e4e4,#c9c9c9);border:1px solid #c9c9c9;box-sizing:border-box;border-radius:2px 2px 0 0;"></div>
<div style="position:absolute;left:124.00px;width:400.00px;text-align:center;transform-origin:50% 50%;top:121.80px;height:24.00px;line-height:24.00px;font-size:9.77px;color:#111;font-weight:normal;white-space:nowrap;transform:scaleX(0.88);-webkit-text-stroke:0.2px #111;"><u>R</u>isikoManagement</div>
<div style="position:absolute;left:265.20px;top:141.60px;width:1285.20px;height:1.00px;background:#e6e6e6;"></div>
<div style="position:absolute;left:171.60px;top:141.60px;width:1378.80px;height:710.00px;border:1px solid #d6d6d6;border-right-color:#c4c4c4;border-top:none;box-sizing:border-box;"></div>
<div style="position:absolute;left:180.00px;transform-origin:0 50%;top:153.00px;height:24.00px;line-height:24.00px;font-size:10.00px;color:#1c1c1c;font-weight:normal;white-space:nowrap;transform:scaleX(0.88);">Ansicht:</div>
<div style="position:absolute;left:217.60px;top:156.00px;width:95.60px;height:17.00px;background:linear-gradient(#f6f6f6,#d2d2d2);border:1px solid #bdbdbd;box-sizing:border-box;border-radius:1px;"></div>
<div style="position:absolute;left:222.00px;transform-origin:0 50%;top:153.20px;height:24.00px;line-height:24.00px;font-size:10.00px;color:#222;font-weight:normal;white-space:nowrap;transform:scaleX(0.88);">Wertentwicklung</div>
<div style="position:absolute;left:303.60px;top:162.60px;width:0;height:0;border-left:2.60px solid transparent;border-right:2.60px solid transparent;border-top:3.60px solid #111"></div>
<div style="position:absolute;left:498.40px;transform-origin:0 50%;top:153.20px;height:24.00px;line-height:24.00px;font-size:10.00px;color:#1c1c1c;font-weight:normal;white-space:nowrap;transform:scaleX(0.88);">Gruppierung:</div>
<div style="position:absolute;left:561.60px;top:156.60px;width:100.00px;height:16.60px;background:linear-gradient(#f6f6f6,#d2d2d2);border:1px solid #bdbdbd;box-sizing:border-box;border-radius:1px;"></div>
<div style="position:absolute;left:564.00px;transform-origin:0 50%;top:153.40px;height:24.00px;line-height:24.00px;font-size:10.23px;color:#222;font-weight:normal;white-space:nowrap;transform:scaleX(0.88);">Konten</div>
<div style="position:absolute;left:651.60px;top:163.00px;width:0;height:0;border-left:2.60px solid transparent;border-right:2.60px solid transparent;border-top:3.60px solid #111"></div>
<div style="position:absolute;left:845.60px;transform-origin:0 50%;top:152.20px;height:24.00px;line-height:24.00px;font-size:10.34px;color:#1c1c1c;font-weight:normal;white-space:nowrap;transform:scaleX(0.88);">Depot an:</div>
<div style="position:absolute;left:892.40px;top:155.20px;width:44.60px;height:15.20px;border-top:1px solid #cfcfcf;box-sizing:border-box;"></div>
<div style="position:absolute;left:896.00px;transform-origin:0 50%;top:152.00px;height:24.00px;line-height:24.00px;font-size:10.34px;color:#1c1c1c;font-weight:normal;white-space:nowrap;transform:scaleX(0.88);">03.05.16</div>
<div style="position:absolute;left:940.00px;top:158.00px;width:13.20px;height:11.20px;background:#5f80aa;border:1px solid #486890;box-sizing:border-box;"></div>
<div style="position:absolute;left:942.40px;top:162.00px;width:8.40px;height:5.60px;background:#b9c8dc;"></div>
<div style="position:absolute;left:1141.60px;top:151.40px;width:106.60px;height:22.60px;background:linear-gradient(#dadada,#c3c3c3);border:1px solid #c6c6c6;box-sizing:border-box;border-radius:1px;"></div>
<div style="position:absolute;left:993.60px;width:400.00px;text-align:center;transform-origin:50% 50%;top:150.80px;height:24.00px;line-height:24.00px;font-size:10.23px;color:#2a2a2a;font-weight:normal;white-space:nowrap;transform:scaleX(0.88);">Ansicht anpassen...</div>
<div style="position:absolute;left:172.80px;top:185.60px;width:1376.80px;height:35.00px;background:#ebebeb;border-bottom:1px solid #a4a4a4;box-sizing:border-box;"></div>
<div style="position:absolute;left:548.80px;top:185.60px;width:1.00px;height:35.00px;background:#d0d0d0;"></div>
<div style="position:absolute;left:698.00px;top:185.60px;width:1.00px;height:35.00px;background:#d0d0d0;"></div>
<div style="position:absolute;left:836.60px;top:185.60px;width:1.00px;height:35.00px;background:#d0d0d0;"></div>
<div style="position:absolute;left:956.60px;top:185.60px;width:1.00px;height:35.00px;background:#d0d0d0;"></div>
<div style="position:absolute;left:1104.80px;top:185.60px;width:1.00px;height:35.00px;background:#d0d0d0;"></div>
<div style="position:absolute;left:1259.40px;top:185.60px;width:1.00px;height:35.00px;background:#d0d0d0;"></div>
<div style="position:absolute;left:1411.60px;top:185.60px;width:1.00px;height:35.00px;background:#d0d0d0;"></div>
<div style="position:absolute;left:161.00px;width:400.00px;text-align:center;transform-origin:50% 50%;top:184.20px;height:24.00px;line-height:24.00px;font-size:11.70px;color:#1c1c1c;font-weight:normal;white-space:nowrap;transform:scaleX(0.88);">Wertpapier</div>
<div style="position:absolute;left:423.60px;width:400.00px;text-align:center;transform-origin:50% 50%;top:184.20px;height:24.00px;line-height:24.00px;font-size:11.70px;color:#1c1c1c;font-weight:normal;white-space:nowrap;transform:scaleX(0.88);">Aktueller</div>
<div style="position:absolute;left:423.60px;width:400.00px;text-align:center;transform-origin:50% 50%;top:198.80px;height:24.00px;line-height:24.00px;font-size:11.70px;color:#1c1c1c;font-weight:normal;white-space:nowrap;transform:scaleX(0.88);">Kurs</div>
<div style="position:absolute;left:567.00px;width:400.00px;text-align:center;transform-origin:50% 50%;top:184.20px;height:24.00px;line-height:24.00px;font-size:11.70px;color:#1c1c1c;font-weight:normal;white-space:nowrap;transform:scaleX(0.88);">Aktuelles</div>
<div style="position:absolute;left:567.00px;width:400.00px;text-align:center;transform-origin:50% 50%;top:198.80px;height:24.00px;line-height:24.00px;font-size:11.70px;color:#1c1c1c;font-weight:normal;white-space:nowrap;transform:scaleX(0.88);">Kursdatum</div>
<div style="position:absolute;left:696.60px;width:400.00px;text-align:center;transform-origin:50% 50%;top:184.20px;height:24.00px;line-height:24.00px;font-size:11.70px;color:#1c1c1c;font-weight:normal;white-space:nowrap;transform:scaleX(0.88);">Kursänderung</div>
<div style="position:absolute;left:990.00px;transform-origin:0 50%;top:184.20px;height:24.00px;line-height:24.00px;font-size:11.70px;color:#1c1c1c;font-weight:normal;white-space:nowrap;transform:scaleX(0.88);">Stück/Nennwert</div>
<div style="position:absolute;left:990.00px;transform-origin:0 50%;top:198.80px;height:24.00px;line-height:24.00px;font-size:11.70px;color:#1c1c1c;font-weight:normal;white-space:nowrap;transform:scaleX(0.88);">Finanzmanager</div>
<div style="position:absolute;left:1066.80px;top:200.60px;width:0;height:0;border-left:3.20px solid transparent;border-right:3.20px solid transparent;border-bottom:5.20px solid #111"></div>
<div style="position:absolute;left:983.00px;width:400.00px;text-align:center;transform-origin:50% 50%;top:184.20px;height:24.00px;line-height:24.00px;font-size:11.70px;color:#1c1c1c;font-weight:normal;white-space:nowrap;transform:scaleX(0.88);">Investitionsbetrag</div>
<div style="position:absolute;left:1135.60px;width:400.00px;text-align:center;transform-origin:50% 50%;top:184.20px;height:24.00px;line-height:24.00px;font-size:11.70px;color:#1c1c1c;font-weight:normal;white-space:nowrap;transform:scaleX(0.88);">Betrag Rendite</div>
<div style="position:absolute;left:1135.60px;width:400.00px;text-align:center;transform-origin:50% 50%;top:198.80px;height:24.00px;line-height:24.00px;font-size:11.70px;color:#1c1c1c;font-weight:normal;white-space:nowrap;transform:scaleX(0.88);">Datumsfilter aktiv</div>
<div style="position:absolute;left:1280.60px;width:400.00px;text-align:center;transform-origin:50% 50%;top:184.20px;height:24.00px;line-height:24.00px;font-size:11.70px;color:#1c1c1c;font-weight:normal;white-space:nowrap;transform:scaleX(0.88);">Aktueller</div>
<div style="position:absolute;left:1280.60px;width:400.00px;text-align:center;transform-origin:50% 50%;top:198.80px;height:24.00px;line-height:24.00px;font-size:11.70px;color:#1c1c1c;font-weight:normal;white-space:nowrap;transform:scaleX(0.88);">Marktwert</div>
<div style="position:absolute;left:172.80px;top:220.60px;width:1376.80px;height:19.56px;background:#e8e8e8;border-bottom:1px solid #e6e6e6;box-sizing:border-box;"></div>
<div style="position:absolute;left:176.00px;transform-origin:0 50%;top:218.98px;height:24.00px;line-height:24.00px;font-size:10.72px;color:#1a1a1a;font-weight:bold;white-space:nowrap;transform:scaleX(0.92);-webkit-text-stroke:0.25px #1a1a1a;">Fondssparkonto</div>
<div style="position:absolute;right:303.40px;transform-origin:100% 50%;top:218.98px;height:24.00px;line-height:24.00px;font-size:12.28px;color:#1a1a1a;font-weight:bold;white-space:nowrap;transform:scaleX(0.92);-webkit-text-stroke:0.25px #1a1a1a;">9.136,14 €</div>
<div style="position:absolute;right:151.20px;transform-origin:100% 50%;top:218.98px;height:24.00px;line-height:24.00px;font-size:12.28px;color:#1a1a1a;font-weight:bold;white-space:nowrap;transform:scaleX(0.92);-webkit-text-stroke:0.25px #1a1a1a;">0,00 €</div>
<div style="position:absolute;right:13.20px;transform-origin:100% 50%;top:218.98px;height:24.00px;line-height:24.00px;font-size:12.28px;color:#1a1a1a;font-weight:bold;white-space:nowrap;transform:scaleX(0.92);-webkit-text-stroke:0.25px #1a1a1a;">9.136,14 €</div>
<div style="position:absolute;left:172.80px;top:240.16px;width:1376.80px;height:19.56px;background:#bddcf7;border-bottom:1px solid #e6e6e6;box-sizing:border-box;"></div>
<div style="position:absolute;left:548.80px;top:240.16px;width:1.00px;height:19.56px;background:#dfdfdf;"></div>
<div style="position:absolute;left:698.00px;top:240.16px;width:1.00px;height:19.56px;background:#dfdfdf;"></div>
<div style="position:absolute;left:836.60px;top:240.16px;width:1.00px;height:19.56px;background:#dfdfdf;"></div>
<div style="position:absolute;left:956.60px;top:240.16px;width:1.00px;height:19.56px;background:#dfdfdf;"></div>
<div style="position:absolute;left:1104.80px;top:240.16px;width:1.00px;height:19.56px;background:#dfdfdf;"></div>
<div style="position:absolute;left:1259.40px;top:240.16px;width:1.00px;height:19.56px;background:#dfdfdf;"></div>
<div style="position:absolute;left:1411.60px;top:240.16px;width:1.00px;height:19.56px;background:#dfdfdf;"></div>
<div style="position:absolute;left:176.00px;transform-origin:0 50%;top:238.54px;height:24.00px;line-height:24.00px;font-size:10.91px;color:#1c1c1c;font-weight:normal;white-space:nowrap;transform:scaleX(0.88);">DEKA-INTERNET CF - (ANTEILE)</div>
<svg style="position:absolute;left:550.40px;top:244.16px;width:10.80px;height:14.40px" viewBox="0 0 12 16"><rect x="1.5" y="1" width="9" height="12" fill="#fafafa" stroke="#b0b0b0" stroke-width="1.1" rx="1.5"/><rect x="2" y="11.5" width="8" height="2.6" fill="#c94a4a"/><rect x="2" y="14.1" width="8" height="1.2" fill="#8aa6c8"/></svg>
<div style="position:absolute;right:865.20px;transform-origin:100% 50%;top:238.54px;height:24.00px;line-height:24.00px;font-size:11.82px;color:#1c1c1c;font-weight:normal;white-space:nowrap;transform:scaleX(0.88);">82,018912</div>
<div style="position:absolute;right:726.60px;transform-origin:100% 50%;top:238.54px;height:24.00px;line-height:24.00px;font-size:11.82px;color:#1c1c1c;font-weight:normal;white-space:nowrap;transform:scaleX(0.88);">01.04.07</div>
<div style="position:absolute;right:458.40px;transform-origin:100% 50%;top:238.54px;height:24.00px;line-height:24.00px;font-size:11.82px;color:#1c1c1c;font-weight:normal;white-space:nowrap;transform:scaleX(0.88);">111,39084594</div>
<div style="position:absolute;right:303.80px;transform-origin:100% 50%;top:238.54px;height:24.00px;line-height:24.00px;font-size:11.82px;color:#1c1c1c;font-weight:normal;white-space:nowrap;transform:scaleX(0.88);">9.136,14 €</div>
<div style="position:absolute;right:151.60px;transform-origin:100% 50%;top:238.54px;height:24.00px;line-height:24.00px;font-size:11.82px;color:#1c1c1c;font-weight:normal;white-space:nowrap;transform:scaleX(0.88);">0,00 €</div>
<div style="position:absolute;right:13.60px;transform-origin:100% 50%;top:238.54px;height:24.00px;line-height:24.00px;font-size:11.82px;color:#1c1c1c;font-weight:normal;white-space:nowrap;transform:scaleX(0.88);">9.136,14 €</div>
<div style="position:absolute;left:172.80px;top:259.72px;width:1376.80px;height:19.56px;background:#ffffff;border-bottom:1px solid #e6e6e6;box-sizing:border-box;"></div>
<div style="position:absolute;left:548.80px;top:259.72px;width:1.00px;height:19.56px;background:#dfdfdf;"></div>
<div style="position:absolute;left:698.00px;top:259.72px;width:1.00px;height:19.56px;background:#dfdfdf;"></div>
<div style="position:absolute;left:836.60px;top:259.72px;width:1.00px;height:19.56px;background:#dfdfdf;"></div>
<div style="position:absolute;left:956.60px;top:259.72px;width:1.00px;height:19.56px;background:#dfdfdf;"></div>
<div style="position:absolute;left:1104.80px;top:259.72px;width:1.00px;height:19.56px;background:#dfdfdf;"></div>
<div style="position:absolute;left:1259.40px;top:259.72px;width:1.00px;height:19.56px;background:#dfdfdf;"></div>
<div style="position:absolute;left:1411.60px;top:259.72px;width:1.00px;height:19.56px;background:#dfdfdf;"></div>
<div style="position:absolute;left:172.80px;top:279.28px;width:1376.80px;height:19.56px;background:#e8e8e8;border-bottom:1px solid #e6e6e6;box-sizing:border-box;"></div>
<div style="position:absolute;left:176.00px;transform-origin:0 50%;top:277.66px;height:24.00px;line-height:24.00px;font-size:11.30px;color:#1a1a1a;font-weight:bold;white-space:nowrap;transform:scaleX(1.0);-webkit-text-stroke:0.25px #1a1a1a;">Wertpapier-Depot</div>
<div style="position:absolute;right:303.40px;transform-origin:100% 50%;top:277.66px;height:24.00px;line-height:24.00px;font-size:12.28px;color:#1a1a1a;font-weight:bold;white-space:nowrap;transform:scaleX(0.92);-webkit-text-stroke:0.25px #1a1a1a;">26.862,56 €</div>
<div style="position:absolute;right:151.20px;transform-origin:100% 50%;top:277.66px;height:24.00px;line-height:24.00px;font-size:12.28px;color:#1a1a1a;font-weight:bold;white-space:nowrap;transform:scaleX(0.92);-webkit-text-stroke:0.25px #1a1a1a;">0,00 €</div>
<div style="position:absolute;right:13.20px;transform-origin:100% 50%;top:277.66px;height:24.00px;line-height:24.00px;font-size:12.28px;color:#1a1a1a;font-weight:bold;white-space:nowrap;transform:scaleX(0.92);-webkit-text-stroke:0.25px #1a1a1a;">26.862,56 €</div>
<div style="position:absolute;left:172.80px;top:298.84px;width:1376.80px;height:19.56px;background:#ffffff;border-bottom:1px solid #e6e6e6;box-sizing:border-box;"></div>
<div style="position:absolute;left:548.80px;top:298.84px;width:1.00px;height:19.56px;background:#dfdfdf;"></div>
<div style="position:absolute;left:698.00px;top:298.84px;width:1.00px;height:19.56px;background:#dfdfdf;"></div>
<div style="position:absolute;left:836.60px;top:298.84px;width:1.00px;height:19.56px;background:#dfdfdf;"></div>
<div style="position:absolute;left:956.60px;top:298.84px;width:1.00px;height:19.56px;background:#dfdfdf;"></div>
<div style="position:absolute;left:1104.80px;top:298.84px;width:1.00px;height:19.56px;background:#dfdfdf;"></div>
<div style="position:absolute;left:1259.40px;top:298.84px;width:1.00px;height:19.56px;background:#dfdfdf;"></div>
<div style="position:absolute;left:1411.60px;top:298.84px;width:1.00px;height:19.56px;background:#dfdfdf;"></div>
<div style="position:absolute;left:176.00px;transform-origin:0 50%;top:297.22px;height:24.00px;line-height:24.00px;font-size:10.91px;color:#1c1c1c;font-weight:normal;white-space:nowrap;transform:scaleX(0.88);">COMPUTERLINKS AG</div>
<svg style="position:absolute;left:550.40px;top:302.84px;width:10.80px;height:14.40px" viewBox="0 0 12 16"><rect x="1.5" y="1" width="9" height="12" fill="#fafafa" stroke="#b0b0b0" stroke-width="1.1" rx="1.5"/><rect x="2" y="11.5" width="8" height="2.6" fill="#c94a4a"/><rect x="2" y="14.1" width="8" height="1.2" fill="#8aa6c8"/></svg>
<div style="position:absolute;right:865.20px;transform-origin:100% 50%;top:297.22px;height:24.00px;line-height:24.00px;font-size:11.82px;color:#1c1c1c;font-weight:normal;white-space:nowrap;transform:scaleX(0.88);">14,50</div>
<div style="position:absolute;right:726.60px;transform-origin:100% 50%;top:297.22px;height:24.00px;line-height:24.00px;font-size:11.82px;color:#1c1c1c;font-weight:normal;white-space:nowrap;transform:scaleX(0.88);">17.02.07</div>
<div style="position:absolute;right:458.40px;transform-origin:100% 50%;top:297.22px;height:24.00px;line-height:24.00px;font-size:11.82px;color:#1c1c1c;font-weight:normal;white-space:nowrap;transform:scaleX(0.88);">120</div>
<div style="position:absolute;right:303.80px;transform-origin:100% 50%;top:297.22px;height:24.00px;line-height:24.00px;font-size:11.82px;color:#1c1c1c;font-weight:normal;white-space:nowrap;transform:scaleX(0.88);">1.740,00 €</div>
<div style="position:absolute;right:151.60px;transform-origin:100% 50%;top:297.22px;height:24.00px;line-height:24.00px;font-size:11.82px;color:#1c1c1c;font-weight:normal;white-space:nowrap;transform:scaleX(0.88);">0,00 €</div>
<div style="position:absolute;right:13.60px;transform-origin:100% 50%;top:297.22px;height:24.00px;line-height:24.00px;font-size:11.82px;color:#1c1c1c;font-weight:normal;white-space:nowrap;transform:scaleX(0.88);">1.740,00 €</div>
<div style="position:absolute;left:172.80px;top:318.40px;width:1376.80px;height:19.56px;background:#ffffff;border-bottom:1px solid #e6e6e6;box-sizing:border-box;"></div>
<div style="position:absolute;left:548.80px;top:318.40px;width:1.00px;height:19.56px;background:#dfdfdf;"></div>
<div style="position:absolute;left:698.00px;top:318.40px;width:1.00px;height:19.56px;background:#dfdfdf;"></div>
<div style="position:absolute;left:836.60px;top:318.40px;width:1.00px;height:19.56px;background:#dfdfdf;"></div>
<div style="position:absolute;left:956.60px;top:318.40px;width:1.00px;height:19.56px;background:#dfdfdf;"></div>
<div style="position:absolute;left:1104.80px;top:318.40px;width:1.00px;height:19.56px;background:#dfdfdf;"></div>
<div style="position:absolute;left:1259.40px;top:318.40px;width:1.00px;height:19.56px;background:#dfdfdf;"></div>
<div style="position:absolute;left:1411.60px;top:318.40px;width:1.00px;height:19.56px;background:#dfdfdf;"></div>
<div style="position:absolute;left:176.00px;transform-origin:0 50%;top:316.78px;height:24.00px;line-height:24.00px;font-size:10.91px;color:#1c1c1c;font-weight:normal;white-space:nowrap;transform:scaleX(0.88);">INFINEON TECH.AG NA O.N.</div>
<svg style="position:absolute;left:550.40px;top:322.40px;width:10.80px;height:14.40px" viewBox="0 0 12 16"><rect x="1.5" y="1" width="9" height="12" fill="#fafafa" stroke="#b0b0b0" stroke-width="1.1" rx="1.5"/><rect x="2" y="11.5" width="8" height="2.6" fill="#c94a4a"/><rect x="2" y="14.1" width="8" height="1.2" fill="#8aa6c8"/></svg>
<div style="position:absolute;right:865.20px;transform-origin:100% 50%;top:316.78px;height:24.00px;line-height:24.00px;font-size:11.82px;color:#1c1c1c;font-weight:normal;white-space:nowrap;transform:scaleX(0.88);">7,92</div>
<div style="position:absolute;right:726.60px;transform-origin:100% 50%;top:316.78px;height:24.00px;line-height:24.00px;font-size:11.82px;color:#1c1c1c;font-weight:normal;white-space:nowrap;transform:scaleX(0.88);">24.02.07</div>
<div style="position:absolute;right:458.40px;transform-origin:100% 50%;top:316.78px;height:24.00px;line-height:24.00px;font-size:11.82px;color:#1c1c1c;font-weight:normal;white-space:nowrap;transform:scaleX(0.88);">120</div>
<div style="position:absolute;right:303.80px;transform-origin:100% 50%;top:316.78px;height:24.00px;line-height:24.00px;font-size:11.82px;color:#1c1c1c;font-weight:normal;white-space:nowrap;transform:scaleX(0.88);">950,40 €</div>
<div style="position:absolute;right:151.60px;transform-origin:100% 50%;top:316.78px;height:24.00px;line-height:24.00px;font-size:11.82px;color:#1c1c1c;font-weight:normal;white-space:nowrap;transform:scaleX(0.88);">0,00 €</div>
<div style="position:absolute;right:13.60px;transform-origin:100% 50%;top:316.78px;height:24.00px;line-height:24.00px;font-size:11.82px;color:#1c1c1c;font-weight:normal;white-space:nowrap;transform:scaleX(0.88);">950,40 €</div>
<div style="position:absolute;left:172.80px;top:337.96px;width:1376.80px;height:19.56px;background:#ffffff;border-bottom:1px solid #e6e6e6;box-sizing:border-box;"></div>
<div style="position:absolute;left:548.80px;top:337.96px;width:1.00px;height:19.56px;background:#dfdfdf;"></div>
<div style="position:absolute;left:698.00px;top:337.96px;width:1.00px;height:19.56px;background:#dfdfdf;"></div>
<div style="position:absolute;left:836.60px;top:337.96px;width:1.00px;height:19.56px;background:#dfdfdf;"></div>
<div style="position:absolute;left:956.60px;top:337.96px;width:1.00px;height:19.56px;background:#dfdfdf;"></div>
<div style="position:absolute;left:1104.80px;top:337.96px;width:1.00px;height:19.56px;background:#dfdfdf;"></div>
<div style="position:absolute;left:1259.40px;top:337.96px;width:1.00px;height:19.56px;background:#dfdfdf;"></div>
<div style="position:absolute;left:1411.60px;top:337.96px;width:1.00px;height:19.56px;background:#dfdfdf;"></div>
<div style="position:absolute;left:176.00px;transform-origin:0 50%;top:336.34px;height:24.00px;line-height:24.00px;font-size:10.91px;color:#1c1c1c;font-weight:normal;white-space:nowrap;transform:scaleX(0.88);">SAP SE INHABER-AKTIEN O.N.</div>
<svg style="position:absolute;left:550.40px;top:341.96px;width:10.80px;height:14.40px" viewBox="0 0 12 16"><rect x="1.5" y="1" width="9" height="12" fill="#fafafa" stroke="#b0b0b0" stroke-width="1.1" rx="1.5"/><rect x="2" y="11.5" width="8" height="2.6" fill="#c94a4a"/><rect x="2" y="14.1" width="8" height="1.2" fill="#8aa6c8"/></svg>
<div style="position:absolute;right:865.20px;transform-origin:100% 50%;top:336.34px;height:24.00px;line-height:24.00px;font-size:11.82px;color:#1c1c1c;font-weight:normal;white-space:nowrap;transform:scaleX(0.88);">141,08 €</div>
<div style="position:absolute;right:726.60px;transform-origin:100% 50%;top:336.34px;height:24.00px;line-height:24.00px;font-size:11.82px;color:#1c1c1c;font-weight:normal;white-space:nowrap;transform:scaleX(0.88);">10.03.07</div>
<div style="position:absolute;right:458.40px;transform-origin:100% 50%;top:336.34px;height:24.00px;line-height:24.00px;font-size:11.82px;color:#1c1c1c;font-weight:normal;white-space:nowrap;transform:scaleX(0.88);">127,94442869</div>
<div style="position:absolute;right:303.80px;transform-origin:100% 50%;top:336.34px;height:24.00px;line-height:24.00px;font-size:11.82px;color:#1c1c1c;font-weight:normal;white-space:nowrap;transform:scaleX(0.88);">18.050,40 €</div>
<div style="position:absolute;right:151.60px;transform-origin:100% 50%;top:336.34px;height:24.00px;line-height:24.00px;font-size:11.82px;color:#1c1c1c;font-weight:normal;white-space:nowrap;transform:scaleX(0.88);">0,00 €</div>
<div style="position:absolute;right:13.60px;transform-origin:100% 50%;top:336.34px;height:24.00px;line-height:24.00px;font-size:11.82px;color:#1c1c1c;font-weight:normal;white-space:nowrap;transform:scaleX(0.88);">18.050,40 €</div>
<div style="position:absolute;left:172.80px;top:357.52px;width:1376.80px;height:19.56px;background:#ffffff;border-bottom:1px solid #e6e6e6;box-sizing:border-box;"></div>
<div style="position:absolute;left:548.80px;top:357.52px;width:1.00px;height:19.56px;background:#dfdfdf;"></div>
<div style="position:absolute;left:698.00px;top:357.52px;width:1.00px;height:19.56px;background:#dfdfdf;"></div>
<div style="position:absolute;left:836.60px;top:357.52px;width:1.00px;height:19.56px;background:#dfdfdf;"></div>
<div style="position:absolute;left:956.60px;top:357.52px;width:1.00px;height:19.56px;background:#dfdfdf;"></div>
<div style="position:absolute;left:1104.80px;top:357.52px;width:1.00px;height:19.56px;background:#dfdfdf;"></div>
<div style="position:absolute;left:1259.40px;top:357.52px;width:1.00px;height:19.56px;background:#dfdfdf;"></div>
<div style="position:absolute;left:1411.60px;top:357.52px;width:1.00px;height:19.56px;background:#dfdfdf;"></div>
<div style="position:absolute;left:176.00px;transform-origin:0 50%;top:355.90px;height:24.00px;line-height:24.00px;font-size:10.91px;color:#1c1c1c;font-weight:normal;white-space:nowrap;transform:scaleX(0.88);">BMW (BAYRISCHE MOTORENWERKE AG</div>
<svg style="position:absolute;left:550.40px;top:361.52px;width:10.80px;height:14.40px" viewBox="0 0 12 16"><rect x="1.5" y="1" width="9" height="12" fill="#fafafa" stroke="#b0b0b0" stroke-width="1.1" rx="1.5"/><rect x="2" y="11.5" width="8" height="2.6" fill="#c94a4a"/><rect x="2" y="14.1" width="8" height="1.2" fill="#8aa6c8"/></svg>
<div style="position:absolute;right:865.20px;transform-origin:100% 50%;top:355.90px;height:24.00px;line-height:24.00px;font-size:11.82px;color:#1c1c1c;font-weight:normal;white-space:nowrap;transform:scaleX(0.88);">36,98</div>
<div style="position:absolute;right:726.60px;transform-origin:100% 50%;top:355.90px;height:24.00px;line-height:24.00px;font-size:11.82px;color:#1c1c1c;font-weight:normal;white-space:nowrap;transform:scaleX(0.88);">10.03.07</div>
<div style="position:absolute;right:458.40px;transform-origin:100% 50%;top:355.90px;height:24.00px;line-height:24.00px;font-size:11.82px;color:#1c1c1c;font-weight:normal;white-space:nowrap;transform:scaleX(0.88);">143,90914008</div>
<div style="position:absolute;right:303.80px;transform-origin:100% 50%;top:355.90px;height:24.00px;line-height:24.00px;font-size:11.82px;color:#1c1c1c;font-weight:normal;white-space:nowrap;transform:scaleX(0.88);">5.321,76 €</div>
<div style="position:absolute;right:151.60px;transform-origin:100% 50%;top:355.90px;height:24.00px;line-height:24.00px;font-size:11.82px;color:#1c1c1c;font-weight:normal;white-space:nowrap;transform:scaleX(0.88);">0,00 €</div>
<div style="position:absolute;right:13.60px;transform-origin:100% 50%;top:355.90px;height:24.00px;line-height:24.00px;font-size:11.82px;color:#1c1c1c;font-weight:normal;white-space:nowrap;transform:scaleX(0.88);">5.321,76 €</div>
<div style="position:absolute;left:172.80px;top:377.08px;width:1376.80px;height:19.56px;background:#ffffff;border-bottom:1px solid #e6e6e6;box-sizing:border-box;"></div>
<div style="position:absolute;left:548.80px;top:377.08px;width:1.00px;height:19.56px;background:#dfdfdf;"></div>
<div style="position:absolute;left:698.00px;top:377.08px;width:1.00px;height:19.56px;background:#dfdfdf;"></div>
<div style="position:absolute;left:836.60px;top:377.08px;width:1.00px;height:19.56px;background:#dfdfdf;"></div>
<div style="position:absolute;left:956.60px;top:377.08px;width:1.00px;height:19.56px;background:#dfdfdf;"></div>
<div style="position:absolute;left:1104.80px;top:377.08px;width:1.00px;height:19.56px;background:#dfdfdf;"></div>
<div style="position:absolute;left:1259.40px;top:377.08px;width:1.00px;height:19.56px;background:#dfdfdf;"></div>
<div style="position:absolute;left:1411.60px;top:377.08px;width:1.00px;height:19.56px;background:#dfdfdf;"></div>
<div style="position:absolute;left:172.80px;top:630.20px;width:1376.80px;height:21.00px;background:#ebebeb;border-top:1px solid #d6d6d6;box-sizing:border-box;"></div>
<div style="position:absolute;left:176.00px;transform-origin:0 50%;top:629.60px;height:24.00px;line-height:24.00px;font-size:10.76px;color:#1a1a1a;font-weight:bold;white-space:nowrap;transform:scaleX(0.92);-webkit-text-stroke:0.25px #1a1a1a;">Summe:</div>
<div style="position:absolute;right:302.80px;transform-origin:100% 50%;top:629.60px;height:24.00px;line-height:24.00px;font-size:12.39px;color:#1a1a1a;font-weight:bold;white-space:nowrap;transform:scaleX(0.92);-webkit-text-stroke:0.25px #1a1a1a;">35.198,70 €</div>
<div style="position:absolute;right:150.80px;transform-origin:100% 50%;top:629.60px;height:24.00px;line-height:24.00px;font-size:12.39px;color:#1a1a1a;font-weight:bold;white-space:nowrap;transform:scaleX(0.92);-webkit-text-stroke:0.25px #1a1a1a;">0,00 €</div>
<div style="position:absolute;right:12.00px;transform-origin:100% 50%;top:629.60px;height:24.00px;line-height:24.00px;font-size:12.39px;color:#1a1a1a;font-weight:bold;white-space:nowrap;transform:scaleX(0.92);-webkit-text-stroke:0.25px #1a1a1a;">35.198,70 €</div>
<div style="position:absolute;left:172.80px;top:668.80px;width:1376.80px;height:15.20px;background:linear-gradient(#3f6fb7,#5486cf 45%,#4a7bc4);"></div>
<div style="position:absolute;left:176.00px;transform-origin:0 50%;top:665.80px;height:24.00px;line-height:24.00px;font-size:11.30px;color:#ffffff;font-weight:bold;white-space:nowrap;transform:scaleX(0.92);">Transaktionsübersicht Wertpapier</div>
<div style="position:absolute;left:1536.80px;top:669.60px;width:12.80px;height:14.40px;background:#f0f0f0;border:1px solid #9db2cf;box-sizing:border-box;"></div>
<div style="position:absolute;left:1539.40px;top:675.60px;width:0;height:0;border-left:3.80px solid transparent;border-right:3.80px solid transparent;border-top:4.40px solid #111"></div>
<div style="position:absolute;left:1538.80px;top:672.20px;width:8.80px;height:1.20px;background:#111;"></div>
<div style="position:absolute;left:172.80px;top:684.80px;width:1300.00px;height:21.20px;background:#ebebeb;border-bottom:1px solid #c6c6c6;box-sizing:border-box;"></div>
<div style="position:absolute;left:325.40px;top:684.80px;width:1.00px;height:21.20px;background:#cfcfcf;"></div>
<div style="position:absolute;left:472.00px;top:684.80px;width:1.00px;height:21.20px;background:#cfcfcf;"></div>
<div style="position:absolute;left:644.60px;top:684.80px;width:1.00px;height:21.20px;background:#cfcfcf;"></div>
<div style="position:absolute;left:791.00px;top:684.80px;width:1.00px;height:21.20px;background:#cfcfcf;"></div>
<div style="position:absolute;left:972.60px;top:684.80px;width:1.00px;height:21.20px;background:#cfcfcf;"></div>
<div style="position:absolute;left:1124.80px;top:684.80px;width:1.00px;height:21.20px;background:#cfcfcf;"></div>
<div style="position:absolute;left:1291.80px;top:684.80px;width:1.00px;height:21.20px;background:#cfcfcf;"></div>
<div style="position:absolute;left:43.60px;width:400.00px;text-align:center;transform-origin:50% 50%;top:683.20px;height:24.00px;line-height:24.00px;font-size:11.36px;color:#1c1c1c;font-weight:normal;white-space:nowrap;transform:scaleX(0.88);">Datum</div>
<div style="position:absolute;left:198.60px;width:400.00px;text-align:center;transform-origin:50% 50%;top:683.20px;height:24.00px;line-height:24.00px;font-size:11.36px;color:#1c1c1c;font-weight:normal;white-space:nowrap;transform:scaleX(0.88);">Vorgang</div>
<div style="position:absolute;left:358.00px;width:400.00px;text-align:center;transform-origin:50% 50%;top:683.20px;height:24.00px;line-height:24.00px;font-size:11.36px;color:#1c1c1c;font-weight:normal;white-space:nowrap;transform:scaleX(0.88);">Stück/Nennwert</div>
<div style="position:absolute;left:517.60px;width:400.00px;text-align:center;transform-origin:50% 50%;top:683.20px;height:24.00px;line-height:24.00px;font-size:11.36px;color:#1c1c1c;font-weight:normal;white-space:nowrap;transform:scaleX(0.88);">Kurs</div>
<div style="position:absolute;left:681.60px;width:400.00px;text-align:center;transform-origin:50% 50%;top:683.20px;height:24.00px;line-height:24.00px;font-size:11.36px;color:#1c1c1c;font-weight:normal;white-space:nowrap;transform:scaleX(0.88);">Preis/Bruttoertrag</div>
<div style="position:absolute;left:848.40px;width:400.00px;text-align:center;transform-origin:50% 50%;top:683.20px;height:24.00px;line-height:24.00px;font-size:11.36px;color:#1c1c1c;font-weight:normal;white-space:nowrap;transform:scaleX(0.88);">Betrag</div>
<div style="position:absolute;left:1008.40px;width:400.00px;text-align:center;transform-origin:50% 50%;top:683.20px;height:24.00px;line-height:24.00px;font-size:11.36px;color:#1c1c1c;font-weight:normal;white-space:nowrap;transform:scaleX(0.88);">Konto</div>
<div style="position:absolute;left:1176.40px;width:400.00px;text-align:center;transform-origin:50% 50%;top:683.20px;height:24.00px;line-height:24.00px;font-size:11.36px;color:#1c1c1c;font-weight:normal;white-space:nowrap;transform:scaleX(0.88);">Verrechnung</div>
<div style="position:absolute;left:260.80px;top:692.20px;width:0;height:0;border-left:3.80px solid transparent;border-right:3.80px solid transparent;border-top:6.00px solid #111"></div>
<div style="position:absolute;left:172.80px;top:706.00px;width:1287.60px;height:19.60px;background:#bddcf7;border-bottom:1px solid #e6e6e6;box-sizing:border-box;"></div>
<div style="position:absolute;left:325.40px;top:706.00px;width:1.00px;height:19.60px;background:#dfdfdf;"></div>
<div style="position:absolute;left:472.00px;top:706.00px;width:1.00px;height:19.60px;background:#dfdfdf;"></div>
<div style="position:absolute;left:644.60px;top:706.00px;width:1.00px;height:19.60px;background:#dfdfdf;"></div>
<div style="position:absolute;left:791.00px;top:706.00px;width:1.00px;height:19.60px;background:#dfdfdf;"></div>
<div style="position:absolute;left:972.60px;top:706.00px;width:1.00px;height:19.60px;background:#dfdfdf;"></div>
<div style="position:absolute;left:1124.80px;top:706.00px;width:1.00px;height:19.60px;background:#dfdfdf;"></div>
<div style="position:absolute;left:49.00px;width:400.00px;text-align:center;transform-origin:50% 50%;top:704.40px;height:24.00px;line-height:24.00px;font-size:11.48px;color:#1c1c1c;font-weight:normal;white-space:nowrap;transform:scaleX(0.88);">01.04.07</div>
<div style="position:absolute;left:328.00px;transform-origin:0 50%;top:704.40px;height:24.00px;line-height:24.00px;font-size:10.91px;color:#1c1c1c;font-weight:normal;white-space:nowrap;transform:scaleX(0.88);">Kauf</div>
<div style="position:absolute;right:918.40px;transform-origin:100% 50%;top:704.40px;height:24.00px;line-height:24.00px;font-size:11.48px;color:#1c1c1c;font-weight:normal;white-space:nowrap;transform:scaleX(0.88);">12,19230999</div>
<div style="position:absolute;left:517.60px;width:400.00px;text-align:center;transform-origin:50% 50%;top:704.40px;height:24.00px;line-height:24.00px;font-size:11.48px;color:#1c1c1c;font-weight:normal;white-space:nowrap;transform:scaleX(0.88);">82,018912</div>
<div style="position:absolute;right:590.20px;transform-origin:100% 50%;top:704.40px;height:24.00px;line-height:24.00px;font-size:11.48px;color:#1c1c1c;font-weight:normal;white-space:nowrap;transform:scaleX(0.88);">1.000,00 €</div>
<div style="position:absolute;right:437.40px;transform-origin:100% 50%;top:704.40px;height:24.00px;line-height:24.00px;font-size:11.48px;color:#1c1c1c;font-weight:normal;white-space:nowrap;transform:scaleX(0.88);">-1.000,00 €</div>
<div style="position:absolute;left:1126.60px;transform-origin:0 50%;top:704.40px;height:24.00px;line-height:24.00px;font-size:11.02px;color:#1c1c1c;font-weight:normal;white-space:nowrap;transform:scaleX(0.88);">Fondssparkonto</div>
<div style="position:absolute;left:1293.60px;transform-origin:0 50%;top:704.40px;height:24.00px;line-height:24.00px;font-size:11.02px;color:#1c1c1c;font-weight:normal;white-space:nowrap;transform:scaleX(0.88);">Fondssparkonto-Bank</div>
<div style="position:absolute;left:172.80px;top:725.60px;width:1287.60px;height:19.60px;background:#fff;border-bottom:1px solid #e6e6e6;box-sizing:border-box;"></div>
<div style="position:absolute;left:325.40px;top:725.60px;width:1.00px;height:19.60px;background:#dfdfdf;"></div>
<div style="position:absolute;left:472.00px;top:725.60px;width:1.00px;height:19.60px;background:#dfdfdf;"></div>
<div style="position:absolute;left:644.60px;top:725.60px;width:1.00px;height:19.60px;background:#dfdfdf;"></div>
<div style="position:absolute;left:791.00px;top:725.60px;width:1.00px;height:19.60px;background:#dfdfdf;"></div>
<div style="position:absolute;left:972.60px;top:725.60px;width:1.00px;height:19.60px;background:#dfdfdf;"></div>
<div style="position:absolute;left:1124.80px;top:725.60px;width:1.00px;height:19.60px;background:#dfdfdf;"></div>
<div style="position:absolute;left:49.00px;width:400.00px;text-align:center;transform-origin:50% 50%;top:724.00px;height:24.00px;line-height:24.00px;font-size:11.48px;color:#1c1c1c;font-weight:normal;white-space:nowrap;transform:scaleX(0.88);">01.03.07</div>
<div style="position:absolute;left:328.00px;transform-origin:0 50%;top:724.00px;height:24.00px;line-height:24.00px;font-size:10.91px;color:#1c1c1c;font-weight:normal;white-space:nowrap;transform:scaleX(0.88);">Kauf</div>
<div style="position:absolute;right:918.40px;transform-origin:100% 50%;top:724.00px;height:24.00px;line-height:24.00px;font-size:11.48px;color:#1c1c1c;font-weight:normal;white-space:nowrap;transform:scaleX(0.88);">12,19230999</div>
<div style="position:absolute;left:517.60px;width:400.00px;text-align:center;transform-origin:50% 50%;top:724.00px;height:24.00px;line-height:24.00px;font-size:11.48px;color:#1c1c1c;font-weight:normal;white-space:nowrap;transform:scaleX(0.88);">82,018912</div>
<div style="position:absolute;right:590.20px;transform-origin:100% 50%;top:724.00px;height:24.00px;line-height:24.00px;font-size:11.48px;color:#1c1c1c;font-weight:normal;white-space:nowrap;transform:scaleX(0.88);">1.000,00 €</div>
<div style="position:absolute;right:437.40px;transform-origin:100% 50%;top:724.00px;height:24.00px;line-height:24.00px;font-size:11.48px;color:#dc4646;font-weight:normal;white-space:nowrap;transform:scaleX(0.88);">-1.000,00 €</div>
<div style="position:absolute;left:1126.60px;transform-origin:0 50%;top:724.00px;height:24.00px;line-height:24.00px;font-size:11.02px;color:#1c1c1c;font-weight:normal;white-space:nowrap;transform:scaleX(0.88);">Fondssparkonto</div>
<div style="position:absolute;left:1293.60px;transform-origin:0 50%;top:724.00px;height:24.00px;line-height:24.00px;font-size:11.02px;color:#1c1c1c;font-weight:normal;white-space:nowrap;transform:scaleX(0.88);">Fondssparkonto-Bank</div>
<div style="position:absolute;left:172.80px;top:745.20px;width:1287.60px;height:19.60px;background:#fff;border-bottom:1px solid #e6e6e6;box-sizing:border-box;"></div>
<div style="position:absolute;left:325.40px;top:745.20px;width:1.00px;height:19.60px;background:#dfdfdf;"></div>
<div style="position:absolute;left:472.00px;top:745.20px;width:1.00px;height:19.60px;background:#dfdfdf;"></div>
<div style="position:absolute;left:644.60px;top:745.20px;width:1.00px;height:19.60px;background:#dfdfdf;"></div>
<div style="position:absolute;left:791.00px;top:745.20px;width:1.00px;height:19.60px;background:#dfdfdf;"></div>
<div style="position:absolute;left:972.60px;top:745.20px;width:1.00px;height:19.60px;background:#dfdfdf;"></div>
<div style="position:absolute;left:1124.80px;top:745.20px;width:1.00px;height:19.60px;background:#dfdfdf;"></div>
<div style="position:absolute;left:49.00px;width:400.00px;text-align:center;transform-origin:50% 50%;top:743.60px;height:24.00px;line-height:24.00px;font-size:11.48px;color:#1c1c1c;font-weight:normal;white-space:nowrap;transform:scaleX(0.88);">01.02.07</div>
<div style="position:absolute;left:328.00px;transform-origin:0 50%;top:743.60px;height:24.00px;line-height:24.00px;font-size:10.91px;color:#1c1c1c;font-weight:normal;white-space:nowrap;transform:scaleX(0.88);">Kauf</div>
<div style="position:absolute;right:918.40px;transform-origin:100% 50%;top:743.60px;height:24.00px;line-height:24.00px;font-size:11.48px;color:#1c1c1c;font-weight:normal;white-space:nowrap;transform:scaleX(0.88);">12,19230999</div>
<div style="position:absolute;left:517.60px;width:400.00px;text-align:center;transform-origin:50% 50%;top:743.60px;height:24.00px;line-height:24.00px;font-size:11.48px;color:#1c1c1c;font-weight:normal;white-space:nowrap;transform:scaleX(0.88);">82,018912</div>
<div style="position:absolute;right:590.20px;transform-origin:100% 50%;top:743.60px;height:24.00px;line-height:24.00px;font-size:11.48px;color:#1c1c1c;font-weight:normal;white-space:nowrap;transform:scaleX(0.88);">1.000,00 €</div>
<div style="position:absolute;right:437.40px;transform-origin:100% 50%;top:743.60px;height:24.00px;line-height:24.00px;font-size:11.48px;color:#dc4646;font-weight:normal;white-space:nowrap;transform:scaleX(0.88);">-1.000,00 €</div>
<div style="position:absolute;left:1126.60px;transform-origin:0 50%;top:743.60px;height:24.00px;line-height:24.00px;font-size:11.02px;color:#1c1c1c;font-weight:normal;white-space:nowrap;transform:scaleX(0.88);">Fondssparkonto</div>
<div style="position:absolute;left:1293.60px;transform-origin:0 50%;top:743.60px;height:24.00px;line-height:24.00px;font-size:11.02px;color:#1c1c1c;font-weight:normal;white-space:nowrap;transform:scaleX(0.88);">Fondssparkonto-Bank</div>
<div style="position:absolute;left:172.80px;top:764.80px;width:1287.60px;height:19.60px;background:#fff;border-bottom:1px solid #e6e6e6;box-sizing:border-box;"></div>
<div style="position:absolute;left:325.40px;top:764.80px;width:1.00px;height:19.60px;background:#dfdfdf;"></div>
<div style="position:absolute;left:472.00px;top:764.80px;width:1.00px;height:19.60px;background:#dfdfdf;"></div>
<div style="position:absolute;left:644.60px;top:764.80px;width:1.00px;height:19.60px;background:#dfdfdf;"></div>
<div style="position:absolute;left:791.00px;top:764.80px;width:1.00px;height:19.60px;background:#dfdfdf;"></div>
<div style="position:absolute;left:972.60px;top:764.80px;width:1.00px;height:19.60px;background:#dfdfdf;"></div>
<div style="position:absolute;left:1124.80px;top:764.80px;width:1.00px;height:19.60px;background:#dfdfdf;"></div>
<div style="position:absolute;left:49.00px;width:400.00px;text-align:center;transform-origin:50% 50%;top:763.20px;height:24.00px;line-height:24.00px;font-size:11.48px;color:#1c1c1c;font-weight:normal;white-space:nowrap;transform:scaleX(0.88);">01.01.07</div>
<div style="position:absolute;left:328.00px;transform-origin:0 50%;top:763.20px;height:24.00px;line-height:24.00px;font-size:10.91px;color:#1c1c1c;font-weight:normal;white-space:nowrap;transform:scaleX(0.88);">Kauf</div>
<div style="position:absolute;right:918.40px;transform-origin:100% 50%;top:763.20px;height:24.00px;line-height:24.00px;font-size:11.48px;color:#1c1c1c;font-weight:normal;white-space:nowrap;transform:scaleX(0.88);">12,19230999</div>
<div style="position:absolute;left:517.60px;width:400.00px;text-align:center;transform-origin:50% 50%;top:763.20px;height:24.00px;line-height:24.00px;font-size:11.48px;color:#1c1c1c;font-weight:normal;white-space:nowrap;transform:scaleX(0.88);">82,018912</div>
<div style="position:absolute;right:590.20px;transform-origin:100% 50%;top:763.20px;height:24.00px;line-height:24.00px;font-size:11.48px;color:#1c1c1c;font-weight:normal;white-space:nowrap;transform:scaleX(0.88);">1.000,00 €</div>
<div style="position:absolute;right:437.40px;transform-origin:100% 50%;top:763.20px;height:24.00px;line-height:24.00px;font-size:11.48px;color:#dc4646;font-weight:normal;white-space:nowrap;transform:scaleX(0.88);">-1.000,00 €</div>
<div style="position:absolute;left:1126.60px;transform-origin:0 50%;top:763.20px;height:24.00px;line-height:24.00px;font-size:11.02px;color:#1c1c1c;font-weight:normal;white-space:nowrap;transform:scaleX(0.88);">Fondssparkonto</div>
<div style="position:absolute;left:1293.60px;transform-origin:0 50%;top:763.20px;height:24.00px;line-height:24.00px;font-size:11.02px;color:#1c1c1c;font-weight:normal;white-space:nowrap;transform:scaleX(0.88);">Fondssparkonto-Bank</div>
<div style="position:absolute;left:172.80px;top:784.40px;width:1287.60px;height:19.60px;background:#fff;border-bottom:1px solid #e6e6e6;box-sizing:border-box;"></div>
<div style="position:absolute;left:325.40px;top:784.40px;width:1.00px;height:19.60px;background:#dfdfdf;"></div>
<div style="position:absolute;left:472.00px;top:784.40px;width:1.00px;height:19.60px;background:#dfdfdf;"></div>
<div style="position:absolute;left:644.60px;top:784.40px;width:1.00px;height:19.60px;background:#dfdfdf;"></div>
<div style="position:absolute;left:791.00px;top:784.40px;width:1.00px;height:19.60px;background:#dfdfdf;"></div>
<div style="position:absolute;left:972.60px;top:784.40px;width:1.00px;height:19.60px;background:#dfdfdf;"></div>
<div style="position:absolute;left:1124.80px;top:784.40px;width:1.00px;height:19.60px;background:#dfdfdf;"></div>
<div style="position:absolute;left:49.00px;width:400.00px;text-align:center;transform-origin:50% 50%;top:782.80px;height:24.00px;line-height:24.00px;font-size:11.48px;color:#1c1c1c;font-weight:normal;white-space:nowrap;transform:scaleX(0.88);">01.12.06</div>
<div style="position:absolute;left:328.00px;transform-origin:0 50%;top:782.80px;height:24.00px;line-height:24.00px;font-size:10.91px;color:#1c1c1c;font-weight:normal;white-space:nowrap;transform:scaleX(0.88);">Kauf</div>
<div style="position:absolute;right:918.40px;transform-origin:100% 50%;top:782.80px;height:24.00px;line-height:24.00px;font-size:11.48px;color:#1c1c1c;font-weight:normal;white-space:nowrap;transform:scaleX(0.88);">12,19230999</div>
<div style="position:absolute;left:517.60px;width:400.00px;text-align:center;transform-origin:50% 50%;top:782.80px;height:24.00px;line-height:24.00px;font-size:11.48px;color:#1c1c1c;font-weight:normal;white-space:nowrap;transform:scaleX(0.88);">82,018912</div>
<div style="position:absolute;right:590.20px;transform-origin:100% 50%;top:782.80px;height:24.00px;line-height:24.00px;font-size:11.48px;color:#1c1c1c;font-weight:normal;white-space:nowrap;transform:scaleX(0.88);">1.000,00 €</div>
<div style="position:absolute;right:437.40px;transform-origin:100% 50%;top:782.80px;height:24.00px;line-height:24.00px;font-size:11.48px;color:#dc4646;font-weight:normal;white-space:nowrap;transform:scaleX(0.88);">-1.000,00 €</div>
<div style="position:absolute;left:1126.60px;transform-origin:0 50%;top:782.80px;height:24.00px;line-height:24.00px;font-size:11.02px;color:#1c1c1c;font-weight:normal;white-space:nowrap;transform:scaleX(0.88);">Fondssparkonto</div>
<div style="position:absolute;left:1293.60px;transform-origin:0 50%;top:782.80px;height:24.00px;line-height:24.00px;font-size:11.02px;color:#1c1c1c;font-weight:normal;white-space:nowrap;transform:scaleX(0.88);">Fondssparkonto-Bank</div>
<div style="position:absolute;left:172.80px;top:804.00px;width:1287.60px;height:19.60px;background:#fff;border-bottom:1px solid #e6e6e6;box-sizing:border-box;"></div>
<div style="position:absolute;left:325.40px;top:804.00px;width:1.00px;height:19.60px;background:#dfdfdf;"></div>
<div style="position:absolute;left:472.00px;top:804.00px;width:1.00px;height:19.60px;background:#dfdfdf;"></div>
<div style="position:absolute;left:644.60px;top:804.00px;width:1.00px;height:19.60px;background:#dfdfdf;"></div>
<div style="position:absolute;left:791.00px;top:804.00px;width:1.00px;height:19.60px;background:#dfdfdf;"></div>
<div style="position:absolute;left:972.60px;top:804.00px;width:1.00px;height:19.60px;background:#dfdfdf;"></div>
<div style="position:absolute;left:1124.80px;top:804.00px;width:1.00px;height:19.60px;background:#dfdfdf;"></div>
<div style="position:absolute;left:49.00px;width:400.00px;text-align:center;transform-origin:50% 50%;top:802.40px;height:24.00px;line-height:24.00px;font-size:11.48px;color:#1c1c1c;font-weight:normal;white-space:nowrap;transform:scaleX(0.88);">01.11.06</div>
<div style="position:absolute;left:328.00px;transform-origin:0 50%;top:802.40px;height:24.00px;line-height:24.00px;font-size:10.91px;color:#1c1c1c;font-weight:normal;white-space:nowrap;transform:scaleX(0.88);">Kauf</div>
<div style="position:absolute;right:918.40px;transform-origin:100% 50%;top:802.40px;height:24.00px;line-height:24.00px;font-size:11.48px;color:#1c1c1c;font-weight:normal;white-space:nowrap;transform:scaleX(0.88);">14,25245</div>
<div style="position:absolute;left:517.60px;width:400.00px;text-align:center;transform-origin:50% 50%;top:802.40px;height:24.00px;line-height:24.00px;font-size:11.48px;color:#1c1c1c;font-weight:normal;white-space:nowrap;transform:scaleX(0.88);">7,13</div>
<div style="position:absolute;right:590.20px;transform-origin:100% 50%;top:802.40px;height:24.00px;line-height:24.00px;font-size:11.48px;color:#1c1c1c;font-weight:normal;white-space:nowrap;transform:scaleX(0.88);">100,00 €</div>
<div style="position:absolute;right:437.40px;transform-origin:100% 50%;top:802.40px;height:24.00px;line-height:24.00px;font-size:11.48px;color:#dc4646;font-weight:normal;white-space:nowrap;transform:scaleX(0.88);">-100,00 €</div>
<div style="position:absolute;left:1126.60px;transform-origin:0 50%;top:802.40px;height:24.00px;line-height:24.00px;font-size:11.02px;color:#1c1c1c;font-weight:normal;white-space:nowrap;transform:scaleX(0.88);">Fondssparkonto</div>
<div style="position:absolute;left:1293.60px;transform-origin:0 50%;top:802.40px;height:24.00px;line-height:24.00px;font-size:11.02px;color:#1c1c1c;font-weight:normal;white-space:nowrap;transform:scaleX(0.88);">Fondssparkonto-Bank</div>
<div style="position:absolute;left:172.80px;top:823.60px;width:1287.60px;height:19.60px;background:#fff;border-bottom:1px solid #e6e6e6;box-sizing:border-box;"></div>
<div style="position:absolute;left:325.40px;top:823.60px;width:1.00px;height:19.60px;background:#dfdfdf;"></div>
<div style="position:absolute;left:472.00px;top:823.60px;width:1.00px;height:19.60px;background:#dfdfdf;"></div>
<div style="position:absolute;left:644.60px;top:823.60px;width:1.00px;height:19.60px;background:#dfdfdf;"></div>
<div style="position:absolute;left:791.00px;top:823.60px;width:1.00px;height:19.60px;background:#dfdfdf;"></div>
<div style="position:absolute;left:972.60px;top:823.60px;width:1.00px;height:19.60px;background:#dfdfdf;"></div>
<div style="position:absolute;left:1124.80px;top:823.60px;width:1.00px;height:19.60px;background:#dfdfdf;"></div>
<div style="position:absolute;left:49.00px;width:400.00px;text-align:center;transform-origin:50% 50%;top:822.00px;height:24.00px;line-height:24.00px;font-size:11.48px;color:#1c1c1c;font-weight:normal;white-space:nowrap;transform:scaleX(0.88);">01.11.06</div>
<div style="position:absolute;left:328.00px;transform-origin:0 50%;top:822.00px;height:24.00px;line-height:24.00px;font-size:10.91px;color:#1c1c1c;font-weight:normal;white-space:nowrap;transform:scaleX(0.88);">Kauf</div>
<div style="position:absolute;right:918.40px;transform-origin:100% 50%;top:822.00px;height:24.00px;line-height:24.00px;font-size:11.48px;color:#1c1c1c;font-weight:normal;white-space:nowrap;transform:scaleX(0.88);">12,19230999</div>
<div style="position:absolute;left:517.60px;width:400.00px;text-align:center;transform-origin:50% 50%;top:822.00px;height:24.00px;line-height:24.00px;font-size:11.48px;color:#1c1c1c;font-weight:normal;white-space:nowrap;transform:scaleX(0.88);">82,018912</div>
<div style="position:absolute;right:590.20px;transform-origin:100% 50%;top:822.00px;height:24.00px;line-height:24.00px;font-size:11.48px;color:#1c1c1c;font-weight:normal;white-space:nowrap;transform:scaleX(0.88);">1.000,00 €</div>
<div style="position:absolute;right:437.40px;transform-origin:100% 50%;top:822.00px;height:24.00px;line-height:24.00px;font-size:11.48px;color:#dc4646;font-weight:normal;white-space:nowrap;transform:scaleX(0.88);">-1.000,00 €</div>
<div style="position:absolute;left:1126.60px;transform-origin:0 50%;top:822.00px;height:24.00px;line-height:24.00px;font-size:11.02px;color:#1c1c1c;font-weight:normal;white-space:nowrap;transform:scaleX(0.88);">Fondssparkonto</div>
<div style="position:absolute;left:1293.60px;transform-origin:0 50%;top:822.00px;height:24.00px;line-height:24.00px;font-size:11.02px;color:#1c1c1c;font-weight:normal;white-space:nowrap;transform:scaleX(0.88);">Fondssparkonto-Bank</div>
<div style="position:absolute;left:1460.40px;top:706.00px;width:12.40px;height:137.20px;background:#f2f2f2;border-left:1px solid #e4e4e4;box-sizing:border-box;"></div>
<div style="position:absolute;left:1461.20px;top:720.40px;width:10.40px;height:84.60px;background:linear-gradient(90deg,#e6e6e6,#d2d2d2);border:1px solid #c4c4c4;box-sizing:border-box;border-radius:1px;"></div>
<div style="position:absolute;left:1464.80px;top:713.80px;width:0;height:0;border-left:2.00px solid transparent;border-right:2.00px solid transparent;border-bottom:2.40px solid #333"></div>
<div style="position:absolute;left:1464.80px;top:834.80px;width:0;height:0;border-left:2.00px solid transparent;border-right:2.00px solid transparent;border-top:2.40px solid #333"></div>
<div style="position:absolute;left:1464.40px;top:761.20px;width:4.40px;height:0.80px;background:#999;"></div>
<div style="position:absolute;left:1464.40px;top:763.20px;width:4.40px;height:0.80px;background:#999;"></div>
<div style="position:absolute;left:172.80px;top:706.00px;width:1300.00px;height:137.40px;border-left:1px solid #d8d8d8;border-right:1px solid #d8d8d8;border-bottom:1px solid #d8d8d8;box-sizing:border-box;"></div>
<div style="position:absolute;left:1478.60px;top:686.80px;width:69.40px;height:13.00px;background:linear-gradient(#e2e2e2,#c9c9c9);border:1px solid #c4c4c4;box-sizing:border-box;border-radius:1px;"></div>
<div style="position:absolute;left:1313.20px;width:400.00px;text-align:center;transform-origin:50% 50%;top:681.40px;height:24.00px;line-height:24.00px;font-size:10.45px;color:#222;font-weight:normal;white-space:nowrap;transform:scaleX(0.88);">Neu</div>
<div style="position:absolute;left:1478.60px;top:704.00px;width:69.40px;height:13.00px;background:linear-gradient(#e2e2e2,#c9c9c9);border:1px solid #c4c4c4;box-sizing:border-box;border-radius:1px;"></div>
<div style="position:absolute;left:1313.20px;width:400.00px;text-align:center;transform-origin:50% 50%;top:698.60px;height:24.00px;line-height:24.00px;font-size:10.45px;color:#222;font-weight:normal;white-space:nowrap;transform:scaleX(0.88);">Ändern</div>
<div style="position:absolute;left:1478.60px;top:721.60px;width:69.40px;height:13.00px;background:linear-gradient(#e2e2e2,#c9c9c9);border:1px solid #c4c4c4;box-sizing:border-box;border-radius:1px;"></div>
<div style="position:absolute;left:1313.20px;width:400.00px;text-align:center;transform-origin:50% 50%;top:716.20px;height:24.00px;line-height:24.00px;font-size:10.45px;color:#222;font-weight:normal;white-space:nowrap;transform:scaleX(0.88);">Löschen</div>
<div style="position:absolute;left:1478.60px;top:739.60px;width:69.40px;height:13.00px;background:linear-gradient(#e2e2e2,#c9c9c9);border:1px solid #c4c4c4;box-sizing:border-box;border-radius:1px;"></div>
<div style="position:absolute;left:1307.20px;width:400.00px;text-align:center;transform-origin:50% 50%;top:734.20px;height:24.00px;line-height:24.00px;font-size:10.45px;color:#222;font-weight:normal;white-space:nowrap;transform:scaleX(0.88);">Mehr Info</div>
<div style="position:absolute;left:1530.20px;top:744.80px;width:0;height:0;border-left:2.60px solid transparent;border-right:2.60px solid transparent;border-top:3.20px solid #222"></div>
<div style="position:absolute;left:0.00px;top:857.40px;width:1560.00px;height:2.60px;background:#62676f;"></div>
</div></body></html>
